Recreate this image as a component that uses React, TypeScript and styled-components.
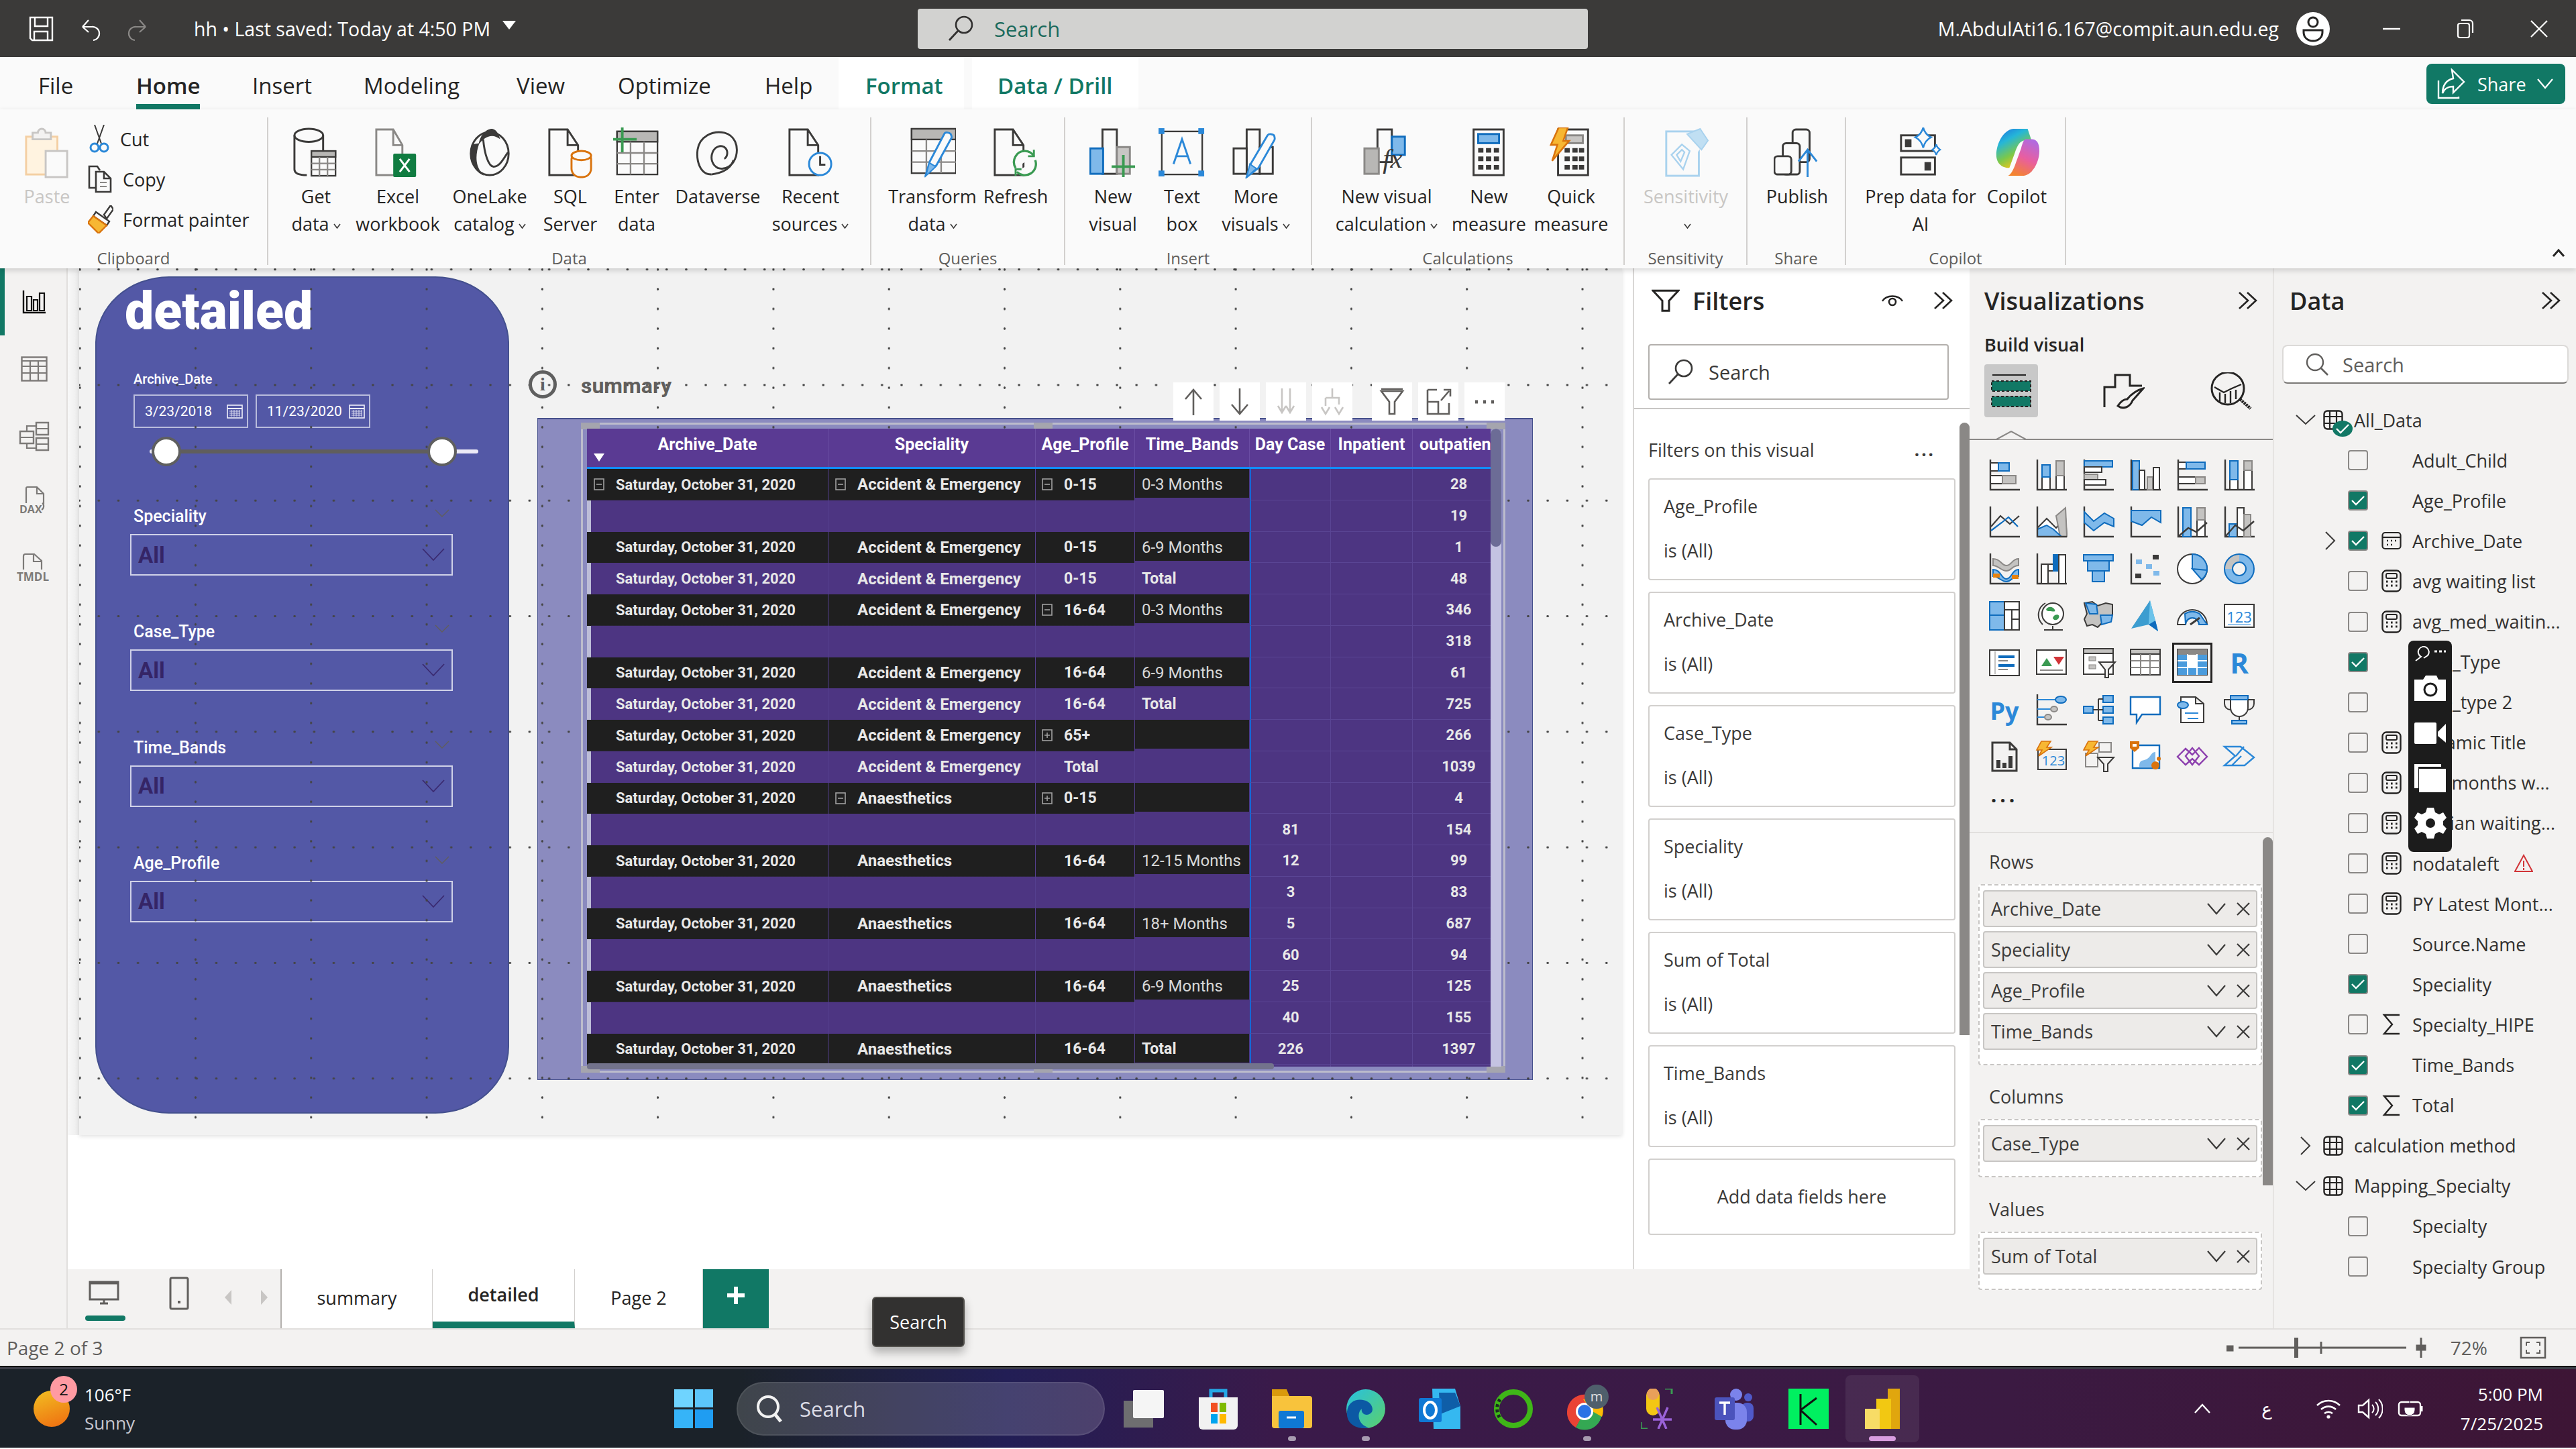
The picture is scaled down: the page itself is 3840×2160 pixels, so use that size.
import { ReactNode } from 'react'
import styled, { createGlobalStyle } from 'styled-components'

const INK = '#3b3a39'
const BLUE = '#7fb9ea'
const BLUE_D = '#0f6cbd'
const GREY = '#c4c3c1'
const TEAL = '#117865'
const UI = '"Open Sans", "Noto Sans", "DejaVu Sans", sans-serif'
const DIN = 'Roboto, "Liberation Sans", sans-serif'

const GlobalStyle = createGlobalStyle`
	html, body {
		margin: 0;
		padding: 0;
		background: #fff;
		overflow: hidden;
	}
	* {
		box-sizing: border-box;
	}
`

const Shell = styled.div`
	width: 3840px;
	height: 2160px;
	display: flex;
	flex-direction: column;
	overflow: hidden;
	font-family: ${UI};
	color: #252423;
`

/* title bar */

const TitleBar = styled.div`
	height: 85px;
	flex: none;
	display: flex;
	align-items: center;
	background: #3b3a39;
	color: #fff;
`

const TitleLeft = styled.div`
	width: 1368px;
	padding-left: 43px;
	display: flex;
	align-items: center;
	gap: 40px;
`

const SavedText = styled.span`
	margin-left: 29px;
	font-size: 28.5px;
	white-space: nowrap;
`

const TitleCaret = styled.span`
	width: 0;
	height: 0;
	margin: -10px 0 0 -22px;
	border-left: 10px solid transparent;
	border-right: 10px solid transparent;
	border-top: 13px solid #fff;
`

const TopSearch = styled.div`
	width: 999px;
	height: 60px;
	display: flex;
	align-items: center;
	gap: 30px;
	padding-left: 44px;
	background: #d2d2d0;
	border-radius: 4px;
	font-size: 31px;
	color: #1b6a5c;
`

const TitleRight = styled.div`
	flex: 1;
	display: flex;
	align-items: center;
	justify-content: flex-end;
`

const Email = styled.span`
	font-size: 28.5px;
	margin-right: 26px;
`

const Avatar = styled.div`
	width: 50px;
	height: 50px;
	margin-right: 37px;
	border-radius: 50%;
	background: #fff;
	display: flex;
	align-items: center;
	justify-content: center;
`

const WinBtn = styled.div`
	width: 110px;
	display: flex;
	justify-content: center;
`

/* ribbon tabs */

const TabRow = styled.div`
	height: 78px;
	flex: none;
	display: flex;
	padding: 0 16px 0 57px;
	background: #fafafa;
`

const RibbonTab = styled.div<{ $w: number; $pad?: number; $contextual?: boolean }>`
	width: ${p => p.$w}px;
	padding-left: ${p => p.$pad ?? 0}px;
	margin-right: ${p => (p.$contextual ? 12 : 0)}px;
	background: ${p => (p.$contextual ? '#fff' : 'transparent')};
	color: ${p => (p.$contextual ? TEAL : '#252423')};
	font-size: 33px;
	font-weight: ${p => (p.$contextual ? 600 : 400)};
	display: flex;
`

const TabLabel = styled.span<{ $active?: boolean }>`
	display: flex;
	align-items: center;
	padding-top: 14px;
	border-bottom: 8px solid ${p => (p.$active ? TEAL : 'transparent')};
	font-weight: ${p => (p.$active ? 600 : 'inherit')};
`

const ShareButton = styled.div`
	margin: 10px 0 0 auto;
	width: 207px;
	height: 60px;
	display: flex;
	align-items: center;
	gap: 16px;
	padding-left: 16px;
	background: ${TEAL};
	border-radius: 8px;
	color: #fff;
	font-size: 27px;
`

/* ribbon */

const Ribbon = styled.div`
	height: 237px;
	flex: none;
	position: relative;
	z-index: 5;
	display: flex;
	background: #fafafa;
	box-shadow: 0 3px 8px rgba(0, 0, 0, 0.16);
`

const RibbonGroup = styled.div<{ $w: number; $pad: number }>`
	width: ${p => p.$w}px;
	height: 220px;
	margin-top: 12px;
	padding-left: ${p => p.$pad}px;
	border-right: 2px solid #d2d0ce;
	display: flex;
	flex-direction: column;
`

const GroupButtons = styled.div`
	flex: 1;
	display: flex;
`

const GroupLabel = styled.div<{ $pad: number }>`
	height: 20px;
	line-height: 20px;
	font-size: 24px;
	color: #605e5c;
	text-align: center;
	white-space: nowrap;
	width: calc(100% + ${p => p.$pad}px);
	margin-left: -${p => p.$pad}px;
`

const BigButton = styled.div<{ $w: number; $muted?: boolean }>`
	width: ${p => p.$w}px;
	padding-top: 15px;
	display: flex;
	flex-direction: column;
	align-items: center;
	color: ${p => (p.$muted ? '#c8c6c4' : '#252423')};
`

const BigLabel = styled.div`
	margin-top: 6px;
	font-size: 27px;
	line-height: 41px;
	text-align: center;
	white-space: nowrap;
`

const MiniCaret = styled.svg`
	width: 11px;
	height: 8px;
	margin-left: 6px;
	vertical-align: 3px;
`

const SmallCol = styled.div`
	display: flex;
	flex-direction: column;
	margin-left: 6px;
	padding-top: 2px;
`

const SmallItem = styled.div`
	height: 60px;
	display: flex;
	align-items: center;
	gap: 14px;
	font-size: 27px;
	white-space: nowrap;
`

const Collapse = styled.svg`
	position: absolute;
	right: 16px;
	bottom: 16px;
	width: 20px;
	height: 14px;
`

const Caret = () => (
	<MiniCaret viewBox='0 0 11 8'>
		<path d='M1 1l4.5 6L10 1' fill='none' stroke={INK} strokeWidth='1.6' />
	</MiniCaret>
)

const Ico = styled.svg`
	width: 70px;
	height: 76px;
	flex: none;
`

const sk = { fill: 'none', stroke: INK, strokeWidth: 3 }

const DocOutline = ({ c = INK }: { c?: string }) => (
	<path d='M4 3h28l16 24v46H4z M32 3v24h16' fill='none' stroke={c} strokeWidth='3' />
)

const MiniTable = ({ x, y, w, h, c = 2 }: { x: number; y: number; w: number; h: number; c?: number }) => (
	<g stroke={INK} strokeWidth='2.4' fill='none'>
		<rect x={x} y={y} width={w} height={h} fill='#fafafa' />
		<rect x={x} y={y} width={w} height={h * 0.24} fill='#b8b7b5' />
		{Array.from({ length: c }).map((_, i) => (
			<path key={i} d={`M${x + ((i + 1) * w) / (c + 1)} ${y + h * 0.24}V${y + h}`} stroke='#8a8886' />
		))}
		<path d={`M${x} ${y + h * 0.5}H${x + w}M${x} ${y + h * 0.75}H${x + w}`} stroke='#8a8886' />
	</g>
)

const RibbonIcons: Record<string, ReactNode> = {
	paste: (
		<>
			<rect x='4' y='14' width='48' height='58' fill='#fff3e0' stroke='#f4cfa3' strokeWidth='3' />
			<path d='M14 14V8h8a6 6 0 0 1 12 0h8v10H14z' fill='#f3f2f1' stroke='#c8c6c4' strokeWidth='3' />
			<rect x='34' y='36' width='33' height='40' fill='#fafafa' stroke='#c8c6c4' strokeWidth='3' />
		</>
	),
	getData: (
		<>
			<ellipse cx='25' cy='12' rx='22' ry='10' {...sk} />
			<path d='M3 12v52c0 7 8 9 19 9M47 12v26' {...sk} />
			<MiniTable x={29} y={36} w={37} h={38} />
		</>
	),
	excel: (
		<>
			<path d='M3 3h26l14 24v46H3z M29 3v24h14' fill='none' stroke='#8a8886' strokeWidth='3' />
			<rect x='29' y='40' width='35' height='36' rx='2' fill='#107c41' />
			<path d='M39 48l15 20M54 48L39 68' stroke='#fff' strokeWidth='3' />
		</>
	),
	onelake: (
		<>
			<ellipse cx='36' cy='40' rx='29' ry='33' {...sk} />
			<path d='M9 26C3 46 10 68 28 74 14 62 13 44 20 24z' fill={INK} />
			<path d='M19 26C22 9 32 2 40 2c6 1 10 8 12 16C40 8 28 14 19 26z' fill={INK} />
			<path d='M26 18c2 22 8 42 16 42 10 0 16-14 22-22' {...sk} />
		</>
	),
	sql: (
		<>
			<DocOutline />
			<rect x='38' y='36' width='30' height='40' rx='13' fill='#fafafa' stroke='#d9730d' strokeWidth='3' />
			<ellipse cx='53' cy='43' rx='15' ry='7' fill='#fafafa' stroke='#d9730d' strokeWidth='3' />
		</>
	),
	enter: (
		<>
			<MiniTable x={6} y={6} w={62} h={66} c={2} />
			<path d='M14 0v38M0 18h36' stroke='#3a9a52' strokeWidth='4' fill='none' />
		</>
	),
	dataverse: (
		<>
			<path d='M26 72C8 72 3 50 5 34 8 14 28 4 46 8c16 4 22 20 18 36-4 14-16 22-28 18-8-4-12-14-8-24 3-8 12-12 18-8 6 4 6 14 0 18' {...sk} />
			<path d='M26 72c14-2 30-8 34-22' {...sk} />
		</>
	),
	recent: (
		<>
			<DocOutline />
			<circle cx='51' cy='56' r='17' fill='#fafafa' stroke='#2b88d8' strokeWidth='3' />
			<path d='M51 44v13h8' stroke={INK} strokeWidth='3' fill='none' />
		</>
	),
	transform: (
		<>
			<MiniTable x={4} y={2} w={68} h={68} c={2} />
			<path d='M26 72l6-20 22-42c2-4 8-2 10 0 2 4 2 6 0 8L42 58z' fill='#fafafa' stroke='#2b88d8' strokeWidth='3' />
			<path d='M26 74l5-20 10 6z' fill={BLUE} stroke='#2b88d8' strokeWidth='2' />
		</>
	),
	refresh: (
		<>
			<DocOutline />
			<path d='M36 62a17 17 0 0 1 14-26 16 16 0 0 1 14 8M66 50a17 17 0 0 1-28 18' fill='#fafafa' stroke='#3a9a52' strokeWidth='3.4' />
			<path d='M64 34v10h-9M36 74V64h9' fill='none' stroke='#3a9a52' strokeWidth='3' />
		</>
	),
	newVisual: (
		<>
			<rect x='20' y='3' width='22' height='68' fill='#fafafa' stroke={INK} strokeWidth='3' />
			<rect x='42' y='30' width='20' height='41' fill='#c8c6c4' stroke='#8a8886' strokeWidth='3' />
			<rect x='1' y='32' width='20' height='39' fill={BLUE} stroke={BLUE_D} strokeWidth='3' />
			<path d='M52 42v34M34 60h36' stroke='#3a9a52' strokeWidth='4' fill='none' />
		</>
	),
	textBox: (
		<>
			<rect x='5' y='6' width='62' height='66' fill='none' stroke={INK} strokeWidth='2.4' />
			{[[0, 1], [61, 1], [0, 66], [61, 66]].map(([x, y]) => (
				<rect key={`${x}${y}`} x={x} y={y} width='9' height='9' fill='#2b88d8' />
			))}
			<path d='M23 56L36 18l13 38M27 44h18' fill='none' stroke='#2b88d8' strokeWidth='3' />
		</>
	),
	moreVisuals: (
		<>
			<rect x='22' y='3' width='20' height='68' fill='#fafafa' stroke={INK} strokeWidth='3' />
			<rect x='42' y='30' width='20' height='41' fill='#fafafa' stroke={INK} strokeWidth='3' />
			<rect x='2' y='32' width='20' height='39' fill='#fafafa' stroke={INK} strokeWidth='3' />
			<path d='M22 76l6-20 26-44c2-3 8-2 10 0 1 3 2 6 0 8L40 62z' fill='#fafafa' stroke='#2b88d8' strokeWidth='3' />
			<path d='M22 76l5-20 10 7z' fill={BLUE} stroke='#2b88d8' strokeWidth='2' />
		</>
	),
	fx: (
		<>
			<rect x='22' y='3' width='22' height='50' fill='#fafafa' stroke={INK} strokeWidth='3' />
			<rect x='44' y='14' width='20' height='28' fill={BLUE} stroke={BLUE_D} strokeWidth='3' />
			<rect x='2' y='32' width='22' height='39' fill='#b8b7b5' stroke='#8a8886' strokeWidth='3' />
			<text x='30' y='62' fontFamily='"Liberation Serif", serif' fontStyle='italic' fontSize='42' fill={INK}>fx</text>
		</>
	),
	measure: (
		<>
			<rect x='12' y='3' width='46' height='70' fill='#fafafa' stroke={INK} strokeWidth='3' />
			<rect x='19' y='10' width='32' height='14' fill={BLUE} stroke={BLUE_D} strokeWidth='3' />
			{[32, 45, 58].map(y => (
				<path key={y} d={`M19 ${y + 3}h8M31 ${y + 3}h8M43 ${y + 3}h8`} stroke={INK} strokeWidth='7' />
			))}
		</>
	),
	quick: (
		<>
			<rect x='16' y='3' width='46' height='70' fill='#fafafa' stroke={INK} strokeWidth='3' />
			<rect x='28' y='12' width='26' height='12' fill='#c8c6c4' stroke='#8a8886' strokeWidth='3' />
			{[32, 45, 58].map(y => (
				<path key={y} d={`M26 ${y + 3}h8M38 ${y + 3}h8M48 ${y + 3}h8`} stroke={INK} strokeWidth='7' />
			))}
			<path d='M18 0h14l-7 20h9L8 50l8-24H6z' transform='translate(-1 0) scale(1 1.02)' fill='#f7b733' stroke='#d9730d' strokeWidth='2.6' />
		</>
	),
	sensitivity: (
		<>
			<rect x='6' y='6' width='50' height='68' fill='none' stroke='#a9d2ee' strokeWidth='3' />
			<path d='M30 14l30-12 10 14-32 44-20-18z' fill='#fafafa' stroke='none' />
			<path d='M38 10l20-8 12 18-10 14z' fill='#c0dff3' stroke='#a9d2ee' strokeWidth='2' />
			<path d='M14 42L30 26l12 10-10 28z M22 42l8-8 4 4-6 14z' fill='none' stroke='#a9d2ee' strokeWidth='2.4' />
		</>
	),
	publish: (
		<>
			<rect x='29' y='3' width='26' height='50' rx='5' {...sk} />
			<rect x='14' y='24' width='26' height='48' rx='5' fill='#fafafa' stroke={INK} strokeWidth='3' />
			<rect x='1' y='44' width='26' height='28' rx='5' fill='#fafafa' stroke={INK} strokeWidth='3' />
			<path d='M52 76V36M38 52l14-18 14 18' fill='none' stroke='#2b88d8' strokeWidth='3' />
		</>
	),
	prep: (
		<>
			<rect x='6' y='12' width='52' height='24' {...sk} />
			<rect x='6' y='46' width='52' height='26' {...sk} />
			<rect x='12' y='18' width='10' height='12' fill={INK} />
			<rect x='42' y='53' width='10' height='13' fill={INK} />
			<path d='M40 0c2 8 6 12 12 15-6 3-10 8-12 16-2-8-6-13-12-16 6-3 10-7 12-15z' fill='#fafafa' stroke='#2b88d8' strokeWidth='2.6' />
			<path d='M60 26c1 4 3 6 6 8-3 2-5 4-6 8-1-4-3-6-6-8 3-2 5-4 6-8z' fill='#fafafa' stroke='#2b88d8' strokeWidth='2.4' />
		</>
	),
	copilot: (
		<>
			<defs>
				<linearGradient id='cpA' x1='0' y1='0' x2='0.5' y2='1'>
					<stop offset='0' stopColor='#1c6de0' />
					<stop offset='0.35' stopColor='#25b6d8' />
					<stop offset='0.7' stopColor='#7cc84a' />
					<stop offset='1' stopColor='#f4c516' />
				</linearGradient>
				<linearGradient id='cpB' x1='0.7' y1='0' x2='0.3' y2='1'>
					<stop offset='0' stopColor='#b06ae0' />
					<stop offset='0.5' stopColor='#e85ea0' />
					<stop offset='1' stopColor='#f4842e' />
				</linearGradient>
			</defs>
			<path d='M30 2h22l6 18H48C40 20 36 28 32 40L24 62c-10 0-20-6-20-20C4 26 14 4 30 2z' fill='url(#cpA)' />
			<path d='M48 18h10c8 0 12 6 12 18 0 16-10 38-26 38H22c4-2 8-8 12-20l8-22c2-8 4-12 6-14z' fill='url(#cpB)' />
		</>
	),
}

type BigItem = { w: number; icon: string; label: ReactNode; muted?: boolean }

const ribbonGroups: { w: number; pad: number; title: string; items: BigItem[] }[] = [
	{ w: 899, pad: 10, title: 'Data', items: [
		{ w: 122, icon: 'getData', label: <>Get<br />data<Caret /></> },
		{ w: 122, icon: 'excel', label: <>Excel<br />workbook</> },
		{ w: 152, icon: 'onelake', label: <>OneLake<br />catalog<Caret /></> },
		{ w: 88, icon: 'sql', label: <>SQL<br />Server</> },
		{ w: 110, icon: 'enter', label: <>Enter<br />data</> },
		{ w: 132, icon: 'dataverse', label: 'Dataverse' },
		{ w: 144, icon: 'recent', label: <>Recent<br />sources<Caret /></> },
	] },
	{ w: 289, pad: 29, title: 'Queries', items: [
		{ w: 124, icon: 'transform', label: <>Transform<br />data<Caret /></> },
		{ w: 124, icon: 'refresh', label: 'Refresh' },
	] },
	{ w: 368, pad: 21, title: 'Insert', items: [
		{ w: 100, icon: 'newVisual', label: <>New<br />visual</> },
		{ w: 106, icon: 'textBox', label: <>Text<br />box</> },
		{ w: 114, icon: 'moreVisuals', label: <>More<br />visuals<Caret /></> },
	] },
	{ w: 466, pad: 35, title: 'Calculations', items: [
		{ w: 152, icon: 'fx', label: <>New visual<br />calculation<Caret /></> },
		{ w: 153, icon: 'measure', label: <>New<br />measure</> },
		{ w: 92, icon: 'quick', label: <>Quick<br />measure</> },
	] },
	{ w: 183, pad: 11, title: 'Sensitivity', items: [
		{ w: 160, icon: 'sensitivity', muted: true, label: <>Sensitivity<br /><Caret /></> },
	] },
	{ w: 147, pad: 14, title: 'Share', items: [
		{ w: 120, icon: 'publish', label: 'Publish' },
	] },
	{ w: 328, pad: 39, title: 'Copilot', items: [
		{ w: 144, icon: 'prep', label: <>Prep data for<br />AI</> },
		{ w: 144, icon: 'copilot', label: 'Copilot' },
	] },
]

const BigBtn = ({ item }: { item: BigItem }) => (
	<BigButton $w={item.w} $muted={item.muted}>
		<Ico viewBox='0 0 72 78'>{RibbonIcons[item.icon]}</Ico>
		<BigLabel>{item.label}</BigLabel>
	</BigButton>
)

/* main area */

const Main = styled.div`
	height: 1580px;
	flex: none;
	display: flex;
	background: #f3f2f1;
`

const Rail = styled.div`
	width: 101px;
	flex: none;
	display: flex;
	flex-direction: column;
	border-right: 2px solid #e1dfdd;
`

const RailItem = styled.div<{ $active?: boolean }>`
	height: 100px;
	display: flex;
	align-items: center;
	justify-content: center;
	border-left: 7px solid ${p => (p.$active ? TEAL : 'transparent')};
	padding-right: 4px;
`

const CenterCol = styled.div`
	width: 2835px;
	flex: none;
	display: flex;
	flex-direction: column;
`

const CenterTop = styled.div`
	height: 1492px;
	display: flex;
`

const Canvas = styled.div`
	width: 2335px;
	flex: none;
	background: #fff;
	padding: 0 16px 0 17px;
	border-right: 2px solid #d9d7d5;
	position: relative;
	&::before {
		content: '';
		position: absolute;
		left: 0;
		top: 0;
		width: 17px;
		height: 1292px;
		background: linear-gradient(90deg, #f8f8f8, #ececec);
	}
`

const ReportPage = styled.div`
	position: relative;
	height: 1292px;
	background: #f2f2f2;
	padding: 12px 0 0 24px;
	display: flex;
	gap: 42px;
	box-shadow: 0 2px 6px rgba(0, 0, 0, 0.12);
`

const DotGrid = styled.div`
	position: absolute;
	inset: 0;
	z-index: 1;
	pointer-events: none;
	background-image: radial-gradient(circle, #444 1.4px, transparent 2px),
		radial-gradient(circle, #444 1.4px, transparent 2px);
	background-size: 172.3px 29.4px, 29.2px 172.3px;
	background-position: -85px -13px, -14.5px -84.5px;
`

const SlicerPanel = styled.div`
	width: 617px;
	height: 1248px;
	flex: none;
	background: #5358a6;
	border: 2px solid #44508e;
	border-radius: 110px / 100px;
	font-family: ${DIN};
	color: #fff;
`

const PanelTitle = styled.div`
	height: 100px;
	line-height: 100px;
	padding-left: 42px;
	font-size: 77px;
	font-weight: 900;
`

const DateLabel = styled.div`
	margin: 36px 0 0 55px;
	height: 30px;
	line-height: 30px;
	font-size: 20px;
	font-weight: 500;
`

const DateRow = styled.div`
	margin: 8px 0 0 55px;
	display: flex;
	gap: 11px;
`

const DateBox = styled.div`
	width: 171px;
	height: 50px;
	padding: 0 6px 0 15px;
	display: flex;
	align-items: center;
	justify-content: space-between;
	border: 2px solid #b9bcdc;
	font-size: 21px;
`

const RangeSlider = styled.div`
	position: relative;
	height: 46px;
	width: 490px;
	margin: 12px 0 0 79px;
	&::before {
		content: '';
		position: absolute;
		left: 0;
		right: 0;
		top: 20px;
		height: 6px;
		border-radius: 3px;
		background: #eceaf6;
	}
	&::after {
		content: '';
		position: absolute;
		left: 25px;
		width: 411px;
		top: 20px;
		height: 6px;
		background: #605e5c;
	}
`

const RangeHandle = styled.div<{ $at: number }>`
	position: absolute;
	z-index: 1;
	top: 1px;
	left: ${p => p.$at}px;
	width: 44px;
	height: 44px;
	border-radius: 50%;
	background: #fff;
	border: 4px solid #5f5f5f;
`

const SlicerStack = styled.div`
	margin: 57px 0 0 50px;
`

const Slicer = styled.div`
	position: relative;
	height: 172.3px;
`

const SlicerLabel = styled.div`
	height: 34px;
	line-height: 34px;
	padding-left: 5px;
	font-size: 25px;
	font-weight: 500;
`

const SlicerHide = styled.svg<{ $x: number; $y: number }>`
	position: absolute;
	left: ${p => p.$x}px;
	top: ${p => p.$y}px;
	width: 22px;
	height: 13px;
`

const SlicerBox = styled.div`
	margin-top: 9px;
	width: 481px;
	height: 62px;
	padding: 0 10px;
	display: flex;
	align-items: center;
	justify-content: space-between;
	border: 2px solid #d0d2e8;
	font-size: 33px;
	font-weight: 700;
	color: #352566;
`

const RightCol = styled.div`
	width: 1484px;
	flex: none;
`

const VisualTitleRow = styled.div`
	height: 211px;
	padding-top: 140px;
	display: flex;
	align-items: flex-start;
	gap: 36px;
	margin-left: -13px;
	position: relative;
	z-index: 2;
`

const InfoBadge = styled.div`
	width: 42px;
	height: 42px;
	border: 5px solid #5f5f5f;
	border-radius: 50%;
	display: flex;
	align-items: center;
	justify-content: center;
	color: #5f5f5f;
	font-family: 'Liberation Serif', serif;
	font-size: 28px;
	font-weight: 700;
`

const VisualName = styled.div`
	font-family: ${DIN};
	font-size: 32px;
	font-weight: 700;
	color: #605e5c;
	line-height: 42px;
	margin-top: 2px;
`

const VisualFrame = styled.div`
	position: relative;
	height: 987px;
	padding: 14px 48px 0 73px;
	background: #8b8bbf;
	border: 2px solid #46508c;
	border-width: 2px 1px 1px 1px;
	display: flex;
`

const FocusBar = styled.div`
	position: absolute;
	z-index: 3;
	top: -55px;
	right: 41px;
	display: flex;
	gap: 9px;
`

const FocusBtn = styled.div<{ $gap?: boolean }>`
	width: 60px;
	height: 57px;
	margin-left: ${p => (p.$gap ? 20 : 0)}px;
	background: #fff;
	display: flex;
	align-items: center;
	justify-content: center;
`

const SelectBox = styled.div`
	position: absolute;
	z-index: 2;
	left: 64px;
	right: 40px;
	top: 5px;
	bottom: 10px;
	border: 3px solid #bcbccc;
	pointer-events: none;
`

const SelHandle = styled.div<{ $v: string; $h: string }>`
	position: absolute;
	${p => p.$v};
	${p => p.$h};
	width: 28px;
	height: 10px;
	background: #a5a5ae;
`

const TableWrap = styled.div`
	position: relative;
	z-index: 2;
	height: 951px;
	display: flex;
`

const TableView = styled.div`
	width: 1347px;
	height: 100%;
	overflow: hidden;
	background: #4d3582;
	font-family: ${DIN};
	color: #e8e8e8;
	font-size: 22px;
`

const gridCols = '360px 309px 148px 171px 121px 122px 138px'

const HeadRow = styled.div`
	position: relative;
	display: grid;
	grid-template-columns: ${gridCols};
	width: 1369px;
	height: 60px;
	background: #5a3a93;
	border-bottom: 3px solid #118dff;
`

const HeadCell = styled.div<{ $pad?: number }>`
	padding: 10px 0 0 ${p => p.$pad ?? 0}px;
	text-align: ${p => (p.$pad ? 'left' : 'center')};
	font-size: 25px;
	font-weight: 700;
	color: #fff;
	line-height: 28px;
	white-space: nowrap;
	overflow: hidden;
	border-right: 1px solid #6a4da3;
`

const SortMark = styled.span`
	position: absolute;
	left: 10px;
	top: 37px;
	width: 0;
	height: 0;
	border-left: 8px solid transparent;
	border-right: 8px solid transparent;
	border-top: 12px solid #fff;
`

const BodyRow = styled.div`
	display: grid;
	grid-template-columns: ${gridCols};
	width: 1369px;
	height: 46.75px;
`

const TextCell = styled.div<{ $dark?: boolean; $short?: boolean; $pad?: number; $light?: boolean; $size?: number }>`
	display: flex;
	align-items: center;
	padding-left: ${p => p.$pad ?? 10}px;
	font-size: ${p => p.$size ?? 22}px;
	font-weight: ${p => (p.$light ? 400 : 700)};
	color: ${p => (p.$light ? '#d8d8d8' : '#e8e8e8')};
	white-space: nowrap;
	background: ${p =>
		p.$dark
			? `linear-gradient(#1f1f1f, #1f1f1f) top / 100% ${p.$short ? 43 : 46.75}px no-repeat`
			: 'transparent'};
	border-right: 1px solid rgba(90, 70, 150, ${p => (p.$short ? 0 : 0.6)});
	&:first-child {
		border-left: ${p => (p.$dark ? '6px solid #1f1f1f' : '6px solid #bdbdd8')};
		padding-left: 37px;
	}
`

const TableExpand = styled.svg`
	width: 16px;
	height: 18px;
	margin: 0 17px 0 -33px;
	flex: none;
`

const NumCell = styled.div<{ $first?: boolean }>`
	display: flex;
	align-items: center;
	justify-content: center;
	font-weight: 700;
	border-right: 1px solid #5a4594;
	border-bottom: 1px solid #5a4594;
	border-left: ${p => (p.$first ? '2px solid #1668d6' : '0')};
`

const VScroll = styled.div`
	width: 16px;
	height: 100%;
	background: #c4c3e2;
	border-radius: 8px 8px 0 0;
	overflow: hidden;
`

const VThumb = styled.div`
	width: 16px;
	height: 176px;
	background: #6c6c96;
	border-radius: 8px;
`

const HScroll = styled.div`
	position: absolute;
	left: 0;
	bottom: -4px;
	width: 1024px;
	height: 9px;
	background: #73738c;
	border-radius: 4px;
`

/* filters */

const FiltersPanel = styled.div`
	width: 500px;
	flex: none;
	background: #fff;
	display: flex;
	flex-direction: column;
	position: relative;
`

const PaneHead = styled.div<{ $pad: number; $right: number }>`
	height: 96px;
	display: flex;
	align-items: center;
	padding: 0 ${p => p.$right}px 0 ${p => p.$pad}px;
	font-size: 36px;
	font-weight: 600;
	color: #252423;
`

const FilterIconGap = styled.span`
	margin-left: 19px;
`

const PushRight = styled.div<{ $gap?: number }>`
	margin-left: auto;
	display: flex;
	align-items: center;
	gap: ${p => p.$gap ?? 0}px;
`

const FilterSearchWrap = styled.div`
	padding: 17px 31px 12px 21px;
	border-bottom: 2px solid #c8c6c4;
`

const FilterSearch = styled.div`
	height: 83px;
	display: flex;
	align-items: center;
	gap: 22px;
	padding-left: 26px;
	border: 2px solid #b3b0ad;
	border-radius: 4px;
	font-size: 29px;
	color: #3b3a39;
`

const FilterBody = styled.div`
	flex: 1;
	padding: 0 21px;
	position: relative;
`

const FilterTitle = styled.div`
	height: 103px;
	padding: 17px 30px 0 0;
	display: flex;
	align-items: center;
	justify-content: space-between;
	font-size: 27px;
	color: #3b3a39;
`

const Dots3 = styled.span`
	letter-spacing: 3px;
	font-size: 26px;
	font-weight: 700;
`

const FilterCard = styled.div<{ $add?: boolean }>`
	width: 458px;
	height: ${p => (p.$add ? 114 : 152)}px;
	margin-bottom: 17px;
	padding: ${p => (p.$add ? '0' : '7px 0 0 21px')};
	border: 2px solid #d2d0ce;
	border-radius: 4px;
	font-size: 27px;
	line-height: 66px;
	color: #3b3a39;
	display: ${p => (p.$add ? 'flex' : 'block')};
	align-items: center;
	justify-content: center;
`

const PaneScroll = styled.div<{ $top: number; $h: number }>`
	position: absolute;
	right: 0;
	top: ${p => p.$top}px;
	width: 15px;
	height: ${p => p.$h}px;
	border-radius: 8px 8px 0 0;
	background: #8a8886;
`

/* page tabs */

const PageBar = styled.div`
	height: 88px;
	display: flex;
	background: #f3f2f1;
`

const ViewTabs = styled.div`
	width: 319px;
	flex: none;
	display: flex;
	align-items: flex-start;
	position: relative;
	border-right: 2px solid #b3b0ad;
`

const ViewMark = styled.div`
	position: absolute;
	left: 26px;
	top: 69px;
	width: 60px;
	height: 8px;
	border-radius: 4px;
	background: ${TEAL};
`

const ViewIcon = styled.svg<{ $x: number; $y: number; $w: number; $h: number }>`
	position: absolute;
	left: ${p => p.$x}px;
	top: ${p => p.$y}px;
	width: ${p => p.$w}px;
	height: ${p => p.$h}px;
`

const PageTab = styled.div<{ $w: number; $active?: boolean }>`
	width: ${p => p.$w}px;
	flex: none;
	height: 88px;
	display: flex;
	align-items: center;
	justify-content: center;
	padding-bottom: 4px;
	background: #fff;
	font-size: 27px;
	font-weight: ${p => (p.$active ? 600 : 400)};
	border-right: 1px solid #d2d0ce;
	border-bottom: ${p => (p.$active ? `10px solid ${TEAL}` : '0')};
`

const AddPage = styled.div`
	width: 98px;
	height: 88px;
	flex: none;
	background: ${TEAL};
	display: flex;
	align-items: center;
	justify-content: center;
	padding-bottom: 10px;
`

const Tip = styled.div`
	position: absolute;
	z-index: 6;
	left: 1300px;
	top: 1933px;
	width: 138px;
	height: 75px;
	display: flex;
	align-items: center;
	justify-content: center;
	border-radius: 6px;
	background: #323130;
	border: 2px solid #55534f;
	box-shadow: 0 8px 14px rgba(0, 0, 0, 0.28);
	color: #fff;
	font-size: 27px;
`

/* visualizations */

const VizPanel = styled.div`
	width: 454px;
	flex: none;
	background: #f3f2f1;
	position: relative;
	border-right: 2px solid #e6e4e2;
`

const VizUpper = styled.div`
	height: 842px;
	border-bottom: 2px solid #e1dfdd;
`

const BuildTitle = styled.div`
	padding-left: 22px;
	height: 36px;
	line-height: 36px;
	font-size: 27px;
	font-weight: 600;
`

const PaneTabs = styled.div`
	position: relative;
	height: 113px;
	margin-top: 11px;
	padding-left: 22px;
	border-bottom: 2px solid #8a8886;
`

const PaneSel = styled.div`
	position: absolute;
	left: 22px;
	top: 0;
	width: 80px;
	height: 79px;
	background: #c8c8c8;
	border-radius: 4px;
	display: flex;
	align-items: center;
	justify-content: center;
`

const PaneTool = styled.svg<{ $x: number }>`
	position: absolute;
	left: ${p => p.$x}px;
	top: 12px;
	width: 62px;
	height: 56px;
`

const PaneNotch = styled.svg`
	position: absolute;
	left: 40px;
	bottom: -2px;
	width: 44px;
	height: 14px;
`

const VizGrid = styled.div`
	margin-top: 29px;
	padding-left: 29px;
	display: grid;
	grid-template-columns: repeat(6, 46px);
	grid-auto-rows: 46px;
	gap: 24px;
`

const VizSvg = styled.svg<{ $sel?: boolean }>`
	width: 46px;
	height: 46px;
	overflow: visible;
	outline: ${p => (p.$sel ? `3px solid #252423` : 'none')};
	outline-offset: 4px;
`

const MoreDots = styled.div`
	font-size: 30px;
	font-weight: 700;
	letter-spacing: 5px;
	line-height: 20px;
	text-align: center;
`

const WellLabel = styled.div<{ $top: number }>`
	margin: ${p => p.$top}px 0 0 29px;
	height: 40px;
	line-height: 40px;
	font-size: 27px;
	color: #3b3a39;
`

const WellBox = styled.div`
	width: 423px;
	margin: 13px 0 0 13px;
	padding: 7px 5px 21px;
	background: #fff;
	border: 2px dashed #c8c6c4;
	border-radius: 4px;
	display: flex;
	flex-direction: column;
	gap: 6px;
`

const Pill = styled.div`
	height: 55px;
	display: flex;
	align-items: center;
	padding: 0 8px 0 10px;
	background: #edebe9;
	border: 2px solid #c8c6c4;
	border-radius: 4px;
	font-size: 27px;
	color: #3b3a39;
`

const PillTools = styled.div`
	margin-left: auto;
	display: flex;
	gap: 14px;
	align-items: center;
`

/* data */

const DataPanel = styled.div`
	flex: 1;
	background: #f3f2f1;
`

const DataSearch = styled.div`
	width: 427px;
	height: 58px;
	margin: 18px 0 24px 12px;
	padding-left: 32px;
	display: flex;
	align-items: center;
	gap: 20px;
	background: #fff;
	border: 2px solid #dcdad8;
	border-bottom-color: #7a7876;
	border-radius: 8px;
	font-size: 29px;
	color: #605e5c;
`

const TreeRow = styled.div<{ $table?: boolean }>`
	height: 60.1px;
	display: flex;
	align-items: center;
	padding-left: ${p => (p.$table ? 32 : 69)}px;
	font-size: 27px;
	white-space: nowrap;
	color: #323130;
`

const TreeChev = styled.div`
	width: 41px;
	flex: none;
	display: flex;
	align-items: center;
	justify-content: center;
	padding-right: 11px;
`

const Check = styled.div<{ $on?: boolean }>`
	width: 30px;
	height: 30px;
	flex: none;
	margin-right: 20px;
	display: flex;
	align-items: center;
	justify-content: center;
	background: ${p => (p.$on ? TEAL : 'transparent')};
	border: 2px solid #8a8886;
	border-radius: 4px;
`

const TypeSlot = styled.div`
	position: relative;
	width: 30px;
	height: 34px;
	flex: none;
	margin-right: 16px;
	display: flex;
	align-items: center;
	justify-content: center;
`

const TableBadge = styled.div`
	position: absolute;
	left: 14px;
	top: 18px;
	width: 30px;
	height: 24px;
	border-radius: 50%;
	background: ${TEAL};
	display: flex;
	align-items: center;
	justify-content: center;
`

const WarnIcon = styled.svg`
	width: 28px;
	height: 28px;
	margin-left: 22px;
`

const Recorder = styled.div`
	position: absolute;
	z-index: 7;
	left: 3590px;
	top: 955px;
	width: 65px;
	height: 315px;
	padding: 8px 9px;
	background: #1c1c1c;
	border-radius: 8px;
	display: flex;
	flex-direction: column;
	align-items: center;
`

const RecorderTop = styled.div`
	height: 29px;
`

const RecorderSlot = styled.div`
	height: 67px;
	display: flex;
	align-items: center;
`

/* status and task bar */

const StatusBar = styled.div`
	height: 58px;
	flex: none;
	display: flex;
	align-items: center;
	padding: 0 44px 0 10px;
	background: #f3f2f1;
	border-top: 2px solid #e1dfdd;
	border-bottom: 2px solid #111;
	font-size: 28px;
	color: #605e5c;
`

const ZoomWrap = styled.div`
	margin-left: auto;
	display: flex;
	align-items: center;
`

const ZoomValue = styled.span`
	margin: 0 48px 0 34px;
`

const Taskbar = styled.div`
	height: 120px;
	flex: none;
	display: flex;
	align-items: center;
	position: relative;
	border-top: 3px solid #3d3e48;
	background: linear-gradient(90deg, #1b2229 0, #1b2229 1100px, #221e55 1500px, #3a1a4a 1900px, #3b1a42 3000px, #3d1535 100%);
	color: #fff;
`

const Weather = styled.div`
	width: 1005px;
	flex: none;
	padding-left: 50px;
	display: flex;
	align-items: center;
	gap: 22px;
`

const WeatherIcon = styled.div`
	position: relative;
	width: 54px;
	height: 54px;
	border-radius: 50%;
	background: linear-gradient(160deg, #f2c022, #ee6b10);
`

const WeatherBadge = styled.div`
	position: absolute;
	left: 25px;
	top: -22px;
	width: 40px;
	height: 40px;
	border-radius: 50%;
	background: #ff9aa2;
	display: flex;
	align-items: center;
	justify-content: center;
	color: #111;
	font-size: 24px;
`

const WeatherText = styled.div`
	font-size: 26px;
	line-height: 42px;
	color: #fff;
`

const WeatherSub = styled.div`
	color: #c8c8d0;
`

const WinLogo = styled.div`
	width: 58px;
	height: 58px;
	flex: none;
	margin-right: 35px;
	display: grid;
	grid-template-columns: 1fr 1fr;
	grid-template-rows: 1fr 1fr;
	gap: 3px;
	& > span:nth-child(1) { background: #6fd4ff; }
	& > span:nth-child(2) { background: #5cc6fb; }
	& > span:nth-child(3) { background: #36b4f8; }
	& > span:nth-child(4) { background: #1f9df2; }
`

const TaskSearch = styled.div`
	width: 549px;
	height: 80px;
	flex: none;
	padding-left: 26px;
	display: flex;
	align-items: center;
	gap: 24px;
	border-radius: 40px;
	background: rgba(255, 255, 255, 0.16);
	border: 2px solid rgba(255, 255, 255, 0.08);
	font-size: 31px;
	color: #dcdce6;
`

const AppSlots = styled.div`
	margin-left: 4px;
	display: flex;
`

const AppSlot = styled.div<{ $active?: boolean; $dot?: boolean }>`
	position: relative;
	width: 110px;
	height: 100px;
	display: flex;
	align-items: center;
	justify-content: center;
	background: ${p => (p.$active ? 'rgba(255,255,255,0.07)' : 'transparent')};
	border-radius: 8px;
	&::after {
		content: '';
		display: ${p => (p.$dot || p.$active ? 'block' : 'none')};
		position: absolute;
		bottom: 2px;
		left: 50%;
		transform: translateX(-50%);
		width: ${p => (p.$active ? 40 : 12)}px;
		height: 7px;
		border-radius: 4px;
		background: ${p => (p.$active ? '#d99de0' : '#a79bb0')};
	}
`

const Tray = styled.div`
	margin-left: auto;
	width: 587px;
	padding-right: 49px;
	display: flex;
	align-items: center;
	font-size: 26px;
`

const TraySlot = styled.div<{ $ml?: number }>`
	width: 60px;
	margin-left: ${p => p.$ml ?? 0}px;
	display: flex;
	align-items: center;
	justify-content: center;
`

const Clock = styled.div`
	margin-left: auto;
	text-align: right;
	line-height: 44px;
	font-size: 26px;
`

/* small drawings */

const Chevrons = () => (
	<svg width='30' height='28' viewBox='0 0 30 28'>
		<path d='M2 2l13 12L2 26M14 2l13 12-13 12' fill='none' stroke='#252423' strokeWidth='2.6' />
	</svg>
)

const Funnel = ({ size = 42, c = '#252423' }: { size?: number; c?: string }) => (
	<svg width={size} height={size * 0.82} viewBox='0 0 42 34'>
		<path d='M2 2h38L26 17v15H16V17z' fill='none' stroke={c} strokeWidth='3' />
	</svg>
)

const LensLeft = ({ c = '#3b3a39', s = 40 }: { c?: string; s?: number }) => (
	<svg width={s} height={s} viewBox='0 0 40 40'>
		<circle cx='25' cy='14' r='12' fill='none' stroke={c} strokeWidth='2.6' />
		<path d='M16 23L3 37' stroke={c} strokeWidth='2.8' />
	</svg>
)

const LensRight = () => (
	<svg width='36' height='36' viewBox='0 0 36 36'>
		<circle cx='15' cy='15' r='12' fill='none' stroke='#605e5c' strokeWidth='2.4' />
		<path d='M24 24l10 10' stroke='#605e5c' strokeWidth='2.6' />
	</svg>
)

const PillChev = () => (
	<svg width='30' height='20' viewBox='0 0 30 20'>
		<path d='M2 2l13 15L28 2' fill='none' stroke='#3b3a39' strokeWidth='2.2' />
	</svg>
)

const PillClose = () => (
	<svg width='22' height='22' viewBox='0 0 22 22'>
		<path d='M2 2l18 18M20 2L2 20' fill='none' stroke='#3b3a39' strokeWidth='2.2' />
	</svg>
)

const CheckMark = () => (
	<svg width='20' height='16' viewBox='0 0 20 16'>
		<path d='M1 8l6 6L19 2' fill='none' stroke='#fff' strokeWidth='2.4' />
	</svg>
)

const ChevDown = () => (
	<svg width='30' height='18' viewBox='0 0 30 18'>
		<path d='M1 2l14 13L29 2' fill='none' stroke='#3b3a39' strokeWidth='2' />
	</svg>
)

const ChevRight = () => (
	<svg width='16' height='28' viewBox='0 0 16 28'>
		<path d='M1 1l13 13L1 27' fill='none' stroke='#3b3a39' strokeWidth='2' />
	</svg>
)

const TableGlyph = () => (
	<svg width='30' height='30' viewBox='0 0 30 30'>
		<rect x='1.5' y='1.5' width='27' height='27' rx='5' fill='none' stroke='#252423' strokeWidth='2.4' />
		<path d='M10 2v26M20 2v26M2 10h26M2 20h26' stroke='#252423' strokeWidth='2.2' />
	</svg>
)

const CalcGlyph = () => (
	<svg width='30' height='34' viewBox='0 0 30 34'>
		<rect x='1.5' y='1.5' width='27' height='31' rx='6' fill='none' stroke='#252423' strokeWidth='2.4' />
		<rect x='7' y='6' width='16' height='7' rx='2' fill='none' stroke='#252423' strokeWidth='2' />
		{[18, 24].map(y => (
			<path key={y} d={`M7 ${y}h2.6M14 ${y}h2.6M21 ${y}h2.6`} stroke='#252423' strokeWidth='3.2' />
		))}
	</svg>
)

const DateGlyph = () => (
	<svg width='30' height='28' viewBox='0 0 30 28'>
		<rect x='1.5' y='2' width='27' height='24' rx='4' fill='none' stroke='#252423' strokeWidth='2.2' />
		<path d='M2 9h26' stroke='#252423' strokeWidth='2.2' />
		<path d='M8 14h2M14 14h2M20 14h2M8 20h2M14 20h2' stroke='#252423' strokeWidth='2.4' />
	</svg>
)

const SumGlyph = () => (
	<svg width='28' height='34' viewBox='0 0 28 34'>
		<path d='M26 3H3l12 14L3 31h23' fill='none' stroke='#252423' strokeWidth='2.4' />
	</svg>
)

const CalendarMini = () => (
	<svg width='24' height='24' viewBox='0 0 24 24'>
		<rect x='1' y='3' width='22' height='19' fill='none' stroke='#f0f0fa' strokeWidth='1.6' />
		<path d='M1 8h22' stroke='#f0f0fa' strokeWidth='2' />
		<path d='M4 12h16M4 15h16M4 18h16M7 10v10M11 10v10M15 10v10M19 10v10' stroke='#d8d8ee' strokeWidth='1' />
	</svg>
)

const ExpandGlyph = ({ open }: { open: boolean }) => (
	<TableExpand viewBox='0 0 16 18'>
		<rect x='1' y='1' width='14' height='16' fill='none' stroke='#a0a0a0' strokeWidth='1.6' />
		<path d={open ? 'M4 9h8' : 'M4 9h8M8 5v8'} stroke='#a0a0a0' strokeWidth='1.6' />
	</TableExpand>
)

const railGrey = '#7c7a78'

const railIcons: ReactNode[] = [
	<svg key='r' width='36' height='36' viewBox='0 0 36 36'>
		<path d='M2 1v33h33' fill='none' stroke='#111' strokeWidth='2.4' />
		<path d='M7 10h7v21H7zM17 15h6v16h-6zM26 5h7v26h-7z' fill='none' stroke='#111' strokeWidth='2.2' />
	</svg>,
	<svg key='t' width='40' height='38' viewBox='0 0 40 38'>
		<rect x='1.5' y='1.5' width='37' height='35' fill='none' stroke={railGrey} strokeWidth='2.4' />
		<path d='M2 7h36M2 15h36M2 25h36M14 7v30M26 7v30' stroke={railGrey} strokeWidth='2.2' />
	</svg>,
	<svg key='m' width='46' height='46' viewBox='0 0 46 46'>
		<path d='M26 3h18v18H26zM2 16h20v18H2zM26 26h18v18H26z' fill='none' stroke={railGrey} strokeWidth='2.4' />
		<path d='M26 12h18M2 25h20M26 35h18M26 8H12v8M12 34v7h14' fill='none' stroke={railGrey} strokeWidth='2.2' />
	</svg>,
	<svg key='d' width='48' height='52' viewBox='0 0 48 52'>
		<path d='M12 26V4a2 2 0 0 1 2-2h14l10 10v16M28 2v10h10M36 26c3 2 3 8-1 10' fill='none' stroke={railGrey} strokeWidth='2.2' />
		<text x='2' y='41' fontFamily={UI} fontSize='16' fontWeight='700' fill={railGrey}>DAX</text>
	</svg>,
	<svg key='f' width='56' height='54' viewBox='0 0 56 54'>
		<path d='M12 26V6a3 3 0 0 1 3-3h13l11 10v13M27 3v11h12' fill='none' stroke={railGrey} strokeWidth='2.2' />
		<text x='2' y='43' fontFamily={UI} fontSize='17' fontWeight='700' fill={railGrey}>TMDL</text>
	</svg>,
]

/* report gallery, one 46 x 46 drawing per visual type */

const Ax = <path d='M2 0v45h44' fill='none' stroke={INK} strokeWidth='2.4' />

const Bx = ({ x, y, w, h, f = '#fff', s = INK }: { x: number; y: number; w: number; h: number; f?: string; s?: string }) => (
	<rect x={x} y={y} width={w} height={h} fill={f} stroke={s} strokeWidth='2' />
)

const vizIcons: { node: ReactNode; sel?: boolean }[] = [
	{ node: <>{Ax}<Bx x={2} y={5} w={12} h={12} /><Bx x={14} y={5} w={16} h={12} f={BLUE} s={BLUE_D} /><Bx x={2} y={24} w={18} h={12} /><Bx x={20} y={24} w={20} h={12} f={GREY} s='#8a8886' /></> },
	{ node: <>{Ax}<Bx x={9} y={26} w={12} h={19} /><Bx x={9} y={8} w={12} h={18} f={BLUE} s={BLUE_D} /><Bx x={30} y={24} w={12} h={21} /><Bx x={30} y={2} w={12} h={22} f={GREY} s='#8a8886' /></> },
	{ node: <><path d='M2 0v45h44' fill='none' stroke={INK} strokeWidth='2.4' /><Bx x={2} y={2} w={42} h={9} f={BLUE} s={BLUE_D} /><Bx x={2} y={11} w={26} h={8} /><Bx x={2} y={22} w={20} h={8} f={GREY} s='#8a8886' /><Bx x={2} y={30} w={32} h={8} /></> },
	{ node: <>{Ax}<Bx x={4} y={2} w={10} h={43} f={BLUE} s={BLUE_D} /><Bx x={14} y={16} w={8} h={29} /><Bx x={26} y={26} w={8} h={19} f={GREY} s='#8a8886' /><Bx x={35} y={12} w={9} h={33} /></> },
	{ node: <>{Ax}<Bx x={2} y={4} w={12} h={10} /><Bx x={14} y={4} w={28} h={10} f={BLUE} s={BLUE_D} /><Bx x={2} y={26} w={26} h={10} /><Bx x={28} y={26} w={14} h={10} f={GREY} s='#8a8886' /></> },
	{ node: <>{Ax}<Bx x={9} y={30} w={12} h={15} /><Bx x={9} y={2} w={12} h={28} f={BLUE} s={BLUE_D} /><Bx x={30} y={16} w={12} h={29} /><Bx x={30} y={2} w={12} h={14} f={GREY} s='#8a8886' /></> },

	{ node: <>{Ax}<path d='M3 30l14-16 14 12 14-12' fill='none' stroke={INK} strokeWidth='2.2' /><path d='M3 36l16-12 10-8 14 14' fill='none' stroke={BLUE_D} strokeWidth='2.2' /></> },
	{ node: <><path d='M2 32l14-14 14 14 14-16 2 29H2z' fill='#fff' stroke={INK} strokeWidth='2' /><path d='M30 14l14-12 2 43H36z' fill={GREY} stroke='#8a8886' strokeWidth='2' /><path d='M2 34l14-6 10 6 12 11H2z' fill={BLUE} stroke={BLUE_D} strokeWidth='2' />{Ax}</> },
	{ node: <>{Ax}<path d='M2 8l14 14 16-12 14 8v12l-14-6-16 12L2 24z' fill={BLUE} stroke={BLUE_D} strokeWidth='2' /></> },
	{ node: <>{Ax}<path d='M2 6h44v18l-14-8-14 12L2 22z' fill={BLUE} stroke={BLUE_D} strokeWidth='2' /></> },
	{ node: <>{Ax}<Bx x={9} y={2} w={12} h={43} f={BLUE} s={BLUE_D} /><Bx x={30} y={20} w={12} h={25} /><Bx x={30} y={2} w={12} h={18} f={GREY} s='#8a8886' /><path d='M3 44l14-12 12 6 16-14' fill='none' stroke={INK} strokeWidth='2.4' /></> },
	{ node: <>{Ax}<Bx x={8} y={26} w={12} h={19} f={BLUE} s={BLUE_D} /><Bx x={20} y={2} w={10} h={43} /><Bx x={30} y={12} w={10} h={33} f={GREY} s='#8a8886' /><path d='M3 44l14-16 12 8 16-14' fill='none' stroke={INK} strokeWidth='2.4' /></> },

	{ node: <>{Ax}<path d='M6 8c12 0 12 10 20 10s8-10 18-10v10c-10 0-10 8-18 8S14 18 6 18z' fill={GREY} stroke='#8a8886' strokeWidth='2' /><path d='M6 24c12 0 12 14 20 14s8-14 18-14v10c-10 0-10 8-18 8S14 34 6 34z' fill={BLUE} stroke={BLUE_D} strokeWidth='2' /><path d='M6 30h10v6H6zM34 32h10v6H34z' fill='#e8820c' /></> },
	{ node: <>{Ax}<Bx x={8} y={16} w={10} h={29} /><Bx x={18} y={16} w={10} h={10} /><Bx x={26} y={2} w={8} h={24} f={BLUE_D} s={BLUE_D} /><Bx x={34} y={2} w={10} h={43} /></> },
	{ node: <><Bx x={1} y={2} w={44} h={9} f={BLUE} s={BLUE_D} /><Bx x={7} y={11} w={32} h={15} f={BLUE} s={BLUE_D} /><Bx x={14} y={26} w={18} h={16} f={BLUE} s={BLUE_D} /></> },
	{ node: <>{Ax}<rect x='9' y='9' width='9' height='7' fill={BLUE} /><rect x='24' y='16' width='9' height='7' fill={BLUE} /><rect x='34' y='2' width='9' height='7' fill={INK} /><rect x='8' y='30' width='9' height='7' fill={INK} /><rect x='35' y='26' width='9' height='7' fill={BLUE} /></> },
	{ node: <><circle cx='23' cy='23' r='22' fill='#fff' stroke={INK} strokeWidth='2' /><path d='M23 23V1a22 22 0 0 1 22 24z M23 23l22 2a22 22 0 0 1-8 14z' fill={BLUE} stroke={BLUE_D} strokeWidth='2' /></> },
	{ node: <><circle cx='23' cy='23' r='16' fill='none' stroke={BLUE} strokeWidth='11' /><path d='M23 7A16 16 0 0 0 7 23' fill='none' stroke={GREY} strokeWidth='11' /><circle cx='23' cy='23' r='22' fill='none' stroke={BLUE_D} strokeWidth='2' /><circle cx='23' cy='23' r='10' fill='none' stroke={BLUE_D} strokeWidth='2' /></> },

	{ node: <><rect x='1' y='2' width='22' height='42' fill={BLUE} stroke={BLUE_D} strokeWidth='2' /><path d='M1 22h22' stroke={BLUE_D} strokeWidth='2' /><rect x='23' y='2' width='22' height='42' fill='#fff' stroke={INK} strokeWidth='2' /><path d='M23 14h22M34 14v30M34 28h11' stroke={INK} strokeWidth='2' /></> },
	{ node: <><circle cx='25' cy='20' r='16' fill='#fff' stroke={INK} strokeWidth='2' /><path d='M16 12c4-4 10-2 12 2s-4 2-8 2-6-2-4-4zM28 22c4-2 8 0 6 4s-6 4-8 2 0-4 2-6z' fill='#3a9a52' /><path d='M14 4A20 20 0 0 0 10 36M12 44h28M25 38v6' fill='none' stroke={INK} strokeWidth='2' /></> },
	{ node: <><path d='M2 4l12-2 8 6 12-4 10 2v14l-4 12-12 2-6 6-8-4-8 2-4-10 4-8z' fill={GREY} stroke={INK} strokeWidth='2' /><path d='M4 4l16 2 2 14H10z M26 22h18l-2 10-14 4z' fill={BLUE} stroke={BLUE_D} strokeWidth='2' /></> },
	{ node: <><path d='M30 0L2 42l26-6 14 10z' fill='#3c9dd0' /><path d='M30 0l12 46-14-10z' fill='#6cc3ea' /><path d='M28 36l14 10-4-16z' fill='#0f6cbd' /></> },
	{ node: <><path d='M1 36a22 22 0 0 1 44 0H33a10 10 0 0 0-20 0z' fill='#fff' stroke={INK} strokeWidth='2' /><path d='M12 20a20 20 0 0 1 22 0l11 16H33a10 10 0 0 0-20 0z' fill={BLUE} stroke={BLUE_D} strokeWidth='2' /><path d='M20 36l14-10' stroke={INK} strokeWidth='3' /></> },
	{ node: <><rect x='1' y='6' width='44' height='34' fill='#fff' stroke={INK} strokeWidth='2' /><text x='23' y='33' textAnchor='middle' fontFamily={UI} fontSize='22' fill='#2b88d8'>123</text><path d='M6 36h34' stroke='#2b88d8' /></> },

	{ node: <><rect x='1' y='4' width='44' height='38' fill='#fff' stroke={INK} strokeWidth='2' /><path d='M9 6v34' stroke='#8a8886' /><path d='M14 14h24M14 27h24' stroke={BLUE_D} strokeWidth='4' /><path d='M14 20h14M14 33h14' stroke='#8a8886' strokeWidth='2' /></> },
	{ node: <><rect x='1' y='4' width='44' height='36' fill='#fff' stroke={INK} strokeWidth='2' /><path d='M8 28l8-12 8 12z' fill='#3a9a52' /><path d='M26 14h16l-8 12z' fill='#d13438' /><path d='M6 34h34' stroke='#8a8886' strokeWidth='2' /></> },
	{ node: <><rect x='1' y='2' width='44' height='38' fill='#fff' stroke={INK} strokeWidth='2' /><rect x='1' y='2' width='44' height='7' fill={GREY} stroke={INK} strokeWidth='2' /><rect x='9' y='14' width='10' height='6' fill={GREY} stroke='#8a8886' /><rect x='9' y='26' width='10' height='6' fill={GREY} stroke='#8a8886' /><path d='M24 22h24L38 33v12h-5V33z' fill='#f3f2f1' stroke={INK} strokeWidth='2' /></> },
	{ node: <><rect x='1' y='3' width='44' height='38' fill='#fff' stroke={INK} strokeWidth='2' /><rect x='1' y='3' width='44' height='7' fill={GREY} stroke={INK} strokeWidth='2' /><path d='M1 20h44M1 30h44M16 10v31M30 10v31' stroke='#8a8886' strokeWidth='2' /></> },
	{ sel: true, node: <><rect x='1' y='3' width='44' height='38' fill='#fff' stroke={INK} strokeWidth='2' /><rect x='1' y='3' width='44' height='8' fill='#8a8886' /><rect x='1' y='30' width='44' height='11' fill='#4a9bdc' /><rect x='30' y='11' width='15' height='30' fill='#4a9bdc' /><rect x='1' y='11' width='14' height='30' fill='#4a9bdc' /><path d='M1 20h44M1 30h44M16 10v31M30 10v31' stroke='#fff' strokeWidth='2' /></> },
	{ node: <text x='23' y='39' textAnchor='middle' fontFamily={UI} fontSize='42' fontWeight='700' fill='#2b88d8'>R</text> },

	{ node: <text x='23' y='38' textAnchor='middle' fontFamily={UI} fontSize='36' fontWeight='700' fill='#2b88d8'>Py</text> },
	{ node: <>{Ax}<path d='M2 8h30M2 22h22M2 34h14' stroke='#2b88d8' strokeWidth='2' /><ellipse cx='37' cy='8' rx='8' ry='5' fill={BLUE} stroke={BLUE_D} strokeWidth='2' /><ellipse cx='27' cy='22' rx='5' ry='4' fill={GREY} stroke='#8a8886' strokeWidth='2' /><ellipse cx='18' cy='34' rx='5' ry='4' fill={GREY} stroke='#8a8886' strokeWidth='2' /></> },
	{ node: <><Bx x={1} y={18} w={14} h={10} f={BLUE} s={BLUE_D} /><Bx x={30} y={2} w={15} h={10} f={BLUE} s={BLUE_D} /><Bx x={30} y={18} w={15} h={10} f={BLUE} s={BLUE_D} /><Bx x={30} y={34} w={15} h={10} f={BLUE} s={BLUE_D} /><path d='M15 23h15M23 7v32M23 7h7M23 39h7' fill='none' stroke={INK} strokeWidth='2' /></> },
	{ node: <path d='M1 4h44v26H18l-8 12V30H1z' fill='#fff' stroke={BLUE_D} strokeWidth='2.4' /> },
	{ node: <><path d='M6 4h22l12 10v28H6z M28 4v10h12' fill='#fff' stroke={INK} strokeWidth='2' /><ellipse cx='9' cy='16' rx='8' ry='5' fill={BLUE} stroke={BLUE_D} strokeWidth='2' /><path d='M12 28h20M16 36h16' stroke='#2b88d8' strokeWidth='2' /></> },
	{ node: <><path d='M10 2h26v18a13 13 0 0 1-26 0z' fill='#fff' stroke={INK} strokeWidth='2' /><rect x='10' y='2' width='26' height='6' fill={BLUE} stroke={BLUE_D} strokeWidth='2' /><path d='M10 8H1v6a9 9 0 0 0 9 9M36 8h9v6a9 9 0 0 1-9 9M23 33v6' fill='none' stroke={INK} strokeWidth='2' /><rect x='12' y='39' width='22' height='5' fill={BLUE} stroke={BLUE_D} strokeWidth='2' /></> },

	{ node: <><path d='M5 2h26l10 10v32H5z M31 2v10h10' fill='#f3f2f1' stroke={INK} strokeWidth='3' /><path d='M11 28h6v12h-6zM20 32h6v8h-6zM29 22h6v18h-6z' fill={INK} /></> },
	{ node: <><rect x='3' y='12' width='42' height='30' fill='#f3f2f1' stroke={INK} strokeWidth='2' /><text x='26' y='36' textAnchor='middle' fontFamily={UI} fontSize='20' fill='#2b88d8'>123</text><path d='M8 0h14l-6 9h7L4 22l5-9H1z' fill='#f7b733' stroke='#d9730d' strokeWidth='1.6' /></> },
	{ node: <><Bx x={24} y={2} w={18} h={14} f='#f3f2f1' s='#8a8886' /><Bx x={4} y={18} w={18} h={20} f='#f3f2f1' s='#8a8886' /><path d='M22 24h24L37 34v11h-6V34z' fill='#f3f2f1' stroke={INK} strokeWidth='2' /><path d='M8 0h14l-6 9h7L4 22l5-9H1z' fill='#f7b733' stroke='#d9730d' strokeWidth='1.6' /></> },
	{ node: <><path d='M4 6h40v34H4z' fill='#fff' stroke={BLUE_D} strokeWidth='2.4' /><path d='M14 38c0-12 6-8 12-12s6-10 12-10v22z' fill={BLUE} /><path d='M0 0h14v10l-7 6-7-6z' fill='#d9730d' /><rect x='4' y='4' width='6' height='4' fill='#fff' /><circle cx='38' cy='36' r='6' fill='#d9730d' /><circle cx='43' cy='26' r='3' fill='#d9730d' /></> },
	{ node: <path d='M1 23L13 11l10 9 10-10 12 13-12 12-10-9-10 9zM23 10l10 12-10 13-10-13z' fill='none' stroke='#8c3fae' strokeWidth='2.4' /> },
	{ node: <path d='M1 8h24l20 16-14 12H1l16-14zM18 22l12-14M12 36l14-14' fill='none' stroke='#2b88d8' strokeWidth='2.4' /> },
]

const fieldWells: { label: string; top: number; items: string[] }[] = [
	{ label: 'Rows', top: 23, items: ['Archive_Date', 'Speciality', 'Age_Profile', 'Time_Bands'] },
	{ label: 'Columns', top: 27, items: ['Case_Type'] },
	{ label: 'Values', top: 28, items: ['Sum of Total'] },
]

const filterFields = ['Age_Profile', 'Archive_Date', 'Case_Type', 'Speciality', 'Sum of Total', 'Time_Bands']

type TreeNode =
	| { kind: 'table'; name: string; open: boolean; badge?: boolean }
	| { kind: 'item'; name: string; on?: boolean; type?: 'calc' | 'date' | 'sum'; chev?: boolean; warn?: boolean }

const tree: TreeNode[] = [
	{ kind: 'table', name: 'All_Data', open: true, badge: true },
	{ kind: 'item', name: 'Adult_Child' },
	{ kind: 'item', name: 'Age_Profile', on: true },
	{ kind: 'item', name: 'Archive_Date', on: true, type: 'date', chev: true },
	{ kind: 'item', name: 'avg waiting list', type: 'calc' },
	{ kind: 'item', name: 'avg_med_waitin...', type: 'calc' },
	{ kind: 'item', name: 'Case_Type', on: true },
	{ kind: 'item', name: 'Case_type 2' },
	{ kind: 'item', name: 'Dynamic Title', type: 'calc' },
	{ kind: 'item', name: 'Last months w...', type: 'calc' },
	{ kind: 'item', name: 'Median waiting...', type: 'calc' },
	{ kind: 'item', name: 'nodataleft', type: 'calc', warn: true },
	{ kind: 'item', name: 'PY Latest Mont...', type: 'calc' },
	{ kind: 'item', name: 'Source.Name' },
	{ kind: 'item', name: 'Speciality', on: true },
	{ kind: 'item', name: 'Specialty_HIPE', type: 'sum' },
	{ kind: 'item', name: 'Time_Bands', on: true },
	{ kind: 'item', name: 'Total', on: true, type: 'sum' },
	{ kind: 'table', name: 'calculation method', open: false },
	{ kind: 'table', name: 'Mapping_Specialty', open: true },
	{ kind: 'item', name: 'Specialty' },
	{ kind: 'item', name: 'Specialty Group' },
]

const SAT = 'Saturday, October 31, 2020'
const AE = 'Accident & Emergency'
const AN = 'Anaesthetics'

type Row = {
	dark?: boolean
	date?: string
	dateOpen?: boolean
	spec?: string
	specOpen?: boolean
	age?: string
	ageMark?: '-' | '+'
	band?: string
	day?: string
	out: string
}

const rows: Row[] = [
	{ dark: true, date: SAT, dateOpen: true, spec: AE, specOpen: true, age: '0-15', ageMark: '-', band: '0-3 Months', out: '28' },
	{ out: '19' },
	{ dark: true, date: SAT, spec: AE, age: '0-15', band: '6-9 Months', out: '1' },
	{ date: SAT, spec: AE, age: '0-15', band: 'Total', out: '48' },
	{ dark: true, date: SAT, spec: AE, age: '16-64', ageMark: '-', band: '0-3 Months', out: '346' },
	{ out: '318' },
	{ dark: true, date: SAT, spec: AE, age: '16-64', band: '6-9 Months', out: '61' },
	{ date: SAT, spec: AE, age: '16-64', band: 'Total', out: '725' },
	{ dark: true, date: SAT, spec: AE, age: '65+', ageMark: '+', out: '266' },
	{ date: SAT, spec: AE, age: 'Total', out: '1039' },
	{ dark: true, date: SAT, spec: AN, specOpen: true, age: '0-15', ageMark: '+', out: '4' },
	{ day: '81', out: '154' },
	{ dark: true, date: SAT, spec: AN, age: '16-64', band: '12-15 Months', day: '12', out: '99' },
	{ day: '3', out: '83' },
	{ dark: true, date: SAT, spec: AN, age: '16-64', band: '18+ Months', day: '5', out: '687' },
	{ day: '60', out: '94' },
	{ dark: true, date: SAT, spec: AN, age: '16-64', band: '6-9 Months', day: '25', out: '125' },
	{ day: '40', out: '155' },
	{ dark: true, date: SAT, spec: AN, age: '16-64', band: 'Total', day: '226', out: '1397' },
	{ out: '' },
]

const heads = ['Archive_Date', 'Speciality', 'Age_Profile', 'Time_Bands', 'Day Case', 'Inpatient', 'outpatient']

const slicers = ['Speciality', 'Case_Type', 'Time_Bands', 'Age_Profile']

const focusTools: { gap?: boolean; d: string; c: string }[] = [
	{ d: 'M20 42V4M8 18L20 4l12 14', c: '#605e5c' },
	{ d: 'M20 2v38M8 26l12 14 12-14', c: '#605e5c' },
	{ d: 'M14 2v36M26 2v36M8 28l6 10 6-10M20 28l6 10 6-10', c: '#c8c6c4' },
	{ d: 'M20 2v14M10 16h20v10M10 16v12M4 30l6 10 6-10M24 30l6 10 6-10', c: '#c8c6c4' },
	{ gap: true, d: 'M4 6h32L24 22v18h-8V22zM4 3h32', c: '#605e5c' },
	{ d: 'M4 4h14M4 4v36h32V24M4 22h16v18M24 20L36 6M28 4h10v10', c: '#605e5c' },
]

export default function App() {
	return (
		<Shell>
			<GlobalStyle />
			<TitleBar>
				<TitleLeft>
					<svg width='37' height='38' viewBox='0 0 37 38'>
						<path d='M2 2h33v34H5l-3-3z' fill='none' stroke='#fff' strokeWidth='2.4' />
						<path d='M9 2v13h19V2M8 36V23h20v13' fill='none' stroke='#fff' strokeWidth='2.4' />
					</svg>
					<svg width='30' height='38' viewBox='0 0 30 38'>
						<path d='M3 16h14a10 10 0 0 1 2 20M3 16l9-10M3 16l9 8' fill='none' stroke='#fff' strokeWidth='2.2' />
					</svg>
					<svg width='30' height='38' viewBox='0 0 30 38'>
						<path d='M27 16H13a10 10 0 0 0-2 20M27 16l-9-10M27 16l-9 8' fill='none' stroke='#8a8886' strokeWidth='2.2' />
					</svg>
					<SavedText>hh • Last saved: Today at 4:50 PM</SavedText>
					<TitleCaret />
				</TitleLeft>
				<TopSearch>
					<LensLeft c='#323130' />
					Search
				</TopSearch>
				<TitleRight>
					<Email>M.AbdulAti16.167@compit.aun.edu.eg</Email>
					<Avatar>
						<svg width='34' height='40' viewBox='0 0 34 40'>
							<circle cx='17' cy='10' r='7' fill='none' stroke='#252423' strokeWidth='3' />
							<path d='M3 22h28v3c0 8-6 13-14 13S3 33 3 25z' fill='none' stroke='#252423' strokeWidth='3' />
						</svg>
					</Avatar>
					<WinBtn>
						<svg width='26' height='26' viewBox='0 0 26 26'><path d='M0 13h26' stroke='#fff' strokeWidth='2.4' /></svg>
					</WinBtn>
					<WinBtn>
						<svg width='26' height='32' viewBox='0 0 26 32'>
							<rect x='2' y='8' width='17' height='21' rx='3' fill='none' stroke='#fff' strokeWidth='2.2' />
							<path d='M7 3h12a5 5 0 0 1 5 5v14' fill='none' stroke='#fff' strokeWidth='2.2' />
						</svg>
					</WinBtn>
					<WinBtn>
						<svg width='26' height='26' viewBox='0 0 26 26'><path d='M1 1l24 24M25 1L1 25' stroke='#fff' strokeWidth='2.2' /></svg>
					</WinBtn>
				</TitleRight>
			</TitleBar>

			<TabRow>
				<RibbonTab $w={146}><TabLabel>File</TabLabel></RibbonTab>
				<RibbonTab $w={173}><TabLabel $active>Home</TabLabel></RibbonTab>
				<RibbonTab $w={166}><TabLabel>Insert</TabLabel></RibbonTab>
				<RibbonTab $w={228}><TabLabel>Modeling</TabLabel></RibbonTab>
				<RibbonTab $w={151}><TabLabel>View</TabLabel></RibbonTab>
				<RibbonTab $w={219}><TabLabel>Optimize</TabLabel></RibbonTab>
				<RibbonTab $w={110}><TabLabel>Help</TabLabel></RibbonTab>
				<RibbonTab $w={187} $pad={40} $contextual><TabLabel>Format</TabLabel></RibbonTab>
				<RibbonTab $w={248} $pad={38} $contextual><TabLabel>Data / Drill</TabLabel></RibbonTab>
				<ShareButton>
					<svg width='44' height='46' viewBox='0 0 44 46'>
						<path d='M2 18v26h30v-2M2 44h30' fill='none' stroke='#fff' strokeWidth='2.4' />
						<path d='M22 2l18 18-16 16v-9c-8 0-14 4-16 10 0-12 6-20 16-22z' fill='none' stroke='#fff' strokeWidth='2.4' />
					</svg>
					Share
					<svg width='24' height='16' viewBox='0 0 24 16'><path d='M1 1l11 13L23 1' fill='none' stroke='#fff' strokeWidth='2.2' /></svg>
				</ShareButton>
			</TabRow>

			<Ribbon>
				<RibbonGroup $w={400} $pad={15}>
					<GroupButtons>
						<BigBtn item={{ w: 110, icon: 'paste', muted: true, label: 'Paste' }} />
						<SmallCol>
							<SmallItem>
								<svg width='34' height='42' viewBox='0 0 34 42'>
									<path d='M10 0l10 28M24 0L14 28' stroke={INK} strokeWidth='2' />
									<circle cx='10' cy='34' r='6' fill='none' stroke='#2b88d8' strokeWidth='3' />
									<circle cx='24' cy='34' r='6' fill='none' stroke='#2b88d8' strokeWidth='3' />
								</svg>
								Cut
							</SmallItem>
							<SmallItem>
								<svg width='38' height='42' viewBox='0 0 38 42'>
									<path d='M14 34H2V2h12l4 6' fill='none' stroke={INK} strokeWidth='2.6' />
									<path d='M12 10h12l10 10v20H12z M24 10v10h10' fill='#fafafa' stroke={INK} strokeWidth='2.6' />
									<path d='M18 26h10M18 32h10' stroke='#8a8886' strokeWidth='2' />
								</svg>
								Copy
							</SmallItem>
							<SmallItem>
								<svg width='38' height='42' viewBox='0 0 38 42'>
									<path d='M24 14L34 0l4 6-10 14z' fill='#fafafa' stroke={INK} strokeWidth='2.4' />
									<path d='M12 10l20 14-4 6-20-14z' fill='#fafafa' stroke={INK} strokeWidth='2.4' />
									<path d='M8 16l20 14-12 12-16-16z' fill='#f7b733' stroke='#d9730d' strokeWidth='2.4' />
								</svg>
								Format painter
							</SmallItem>
						</SmallCol>
					</GroupButtons>
					<GroupLabel $pad={15}>Clipboard</GroupLabel>
				</RibbonGroup>
				{ribbonGroups.map(g => (
					<RibbonGroup key={g.title} $w={g.w} $pad={g.pad}>
						<GroupButtons>
							{g.items.map((it, i) => <BigBtn key={i} item={it} />)}
						</GroupButtons>
						<GroupLabel $pad={g.pad}>{g.title}</GroupLabel>
					</RibbonGroup>
				))}
				<Collapse viewBox='0 0 20 14'>
					<path d='M2 12l8-9 8 9' fill='none' stroke='#252423' strokeWidth='3' />
				</Collapse>
			</Ribbon>

			<Main>
				<Rail>
					{railIcons.map((ic, i) => (
						<RailItem key={i} $active={i === 0}>{ic}</RailItem>
					))}
				</Rail>
				<CenterCol>
					<CenterTop>
						<Canvas>
							<ReportPage>
								<DotGrid />
								<SlicerPanel>
									<PanelTitle>detailed</PanelTitle>
									<DateLabel>Archive_Date</DateLabel>
									<DateRow>
										<DateBox>3/23/2018<CalendarMini /></DateBox>
										<DateBox>11/23/2020<CalendarMini /></DateBox>
									</DateRow>
									<RangeSlider>
										<RangeHandle $at={3} />
										<RangeHandle $at={414} />
									</RangeSlider>
									<SlicerStack>
										{slicers.map(name => (
											<Slicer key={name}>
												<SlicerLabel>{name}</SlicerLabel>
												<SlicerHide $x={454} $y={6} viewBox='0 0 22 13'>
													<path d='M1 1l10 10L21 1' fill='none' stroke='#605e5c' strokeWidth='1.4' />
												</SlicerHide>
												<SlicerBox>
													All
													<svg width='34' height='20' viewBox='0 0 34 20'>
														<path d='M1 1l16 17L33 1' fill='none' stroke='#3a2a70' strokeWidth='1.8' />
													</svg>
												</SlicerBox>
											</Slicer>
										))}
									</SlicerStack>
								</SlicerPanel>
								<RightCol>
									<VisualTitleRow>
										<InfoBadge>i</InfoBadge>
										<VisualName>summary</VisualName>
									</VisualTitleRow>
									<VisualFrame>
										<FocusBar>
											{focusTools.map((t, i) => (
												<FocusBtn key={i} $gap={t.gap}>
													<svg width='40' height='44' viewBox='0 0 40 44'>
														<path d={t.d} fill='none' stroke={t.c} strokeWidth='2.6' />
													</svg>
												</FocusBtn>
											))}
											<FocusBtn>
												<svg width='40' height='10' viewBox='0 0 40 10'>
													<path d='M6 5h4M18 5h4M30 5h4' stroke='#605e5c' strokeWidth='5' />
												</svg>
											</FocusBtn>
										</FocusBar>
										<SelectBox>
											<SelHandle $v='top: -3px' $h='left: -3px' />
											<SelHandle $v='top: -3px' $h='left: 49%' />
											<SelHandle $v='top: -3px' $h='right: -3px' />
											<SelHandle $v='bottom: -3px' $h='left: -3px' />
											<SelHandle $v='bottom: -3px' $h='left: 49%' />
											<SelHandle $v='bottom: -3px' $h='right: -3px' />
										</SelectBox>
										<TableWrap>
											<TableView>
												<HeadRow>
													{heads.map(h => (
														<HeadCell key={h} $pad={h === 'outpatient' ? 10 : 0}>{h}</HeadCell>
													))}
													<SortMark />
												</HeadRow>
												{rows.map((r, i) => (
													<BodyRow key={i}>
														<TextCell $dark={r.dark}>
															{r.dateOpen && <ExpandGlyph open />}
															{r.date}
														</TextCell>
														<TextCell $dark={r.dark} $pad={43} $size={24}>
															{r.specOpen && <ExpandGlyph open />}
															{r.spec}
														</TextCell>
														<TextCell $dark={r.dark} $pad={42} $size={23}>
															{r.ageMark && <ExpandGlyph open={r.ageMark === '-'} />}
															{r.age}
														</TextCell>
														<TextCell $dark={r.dark} $short $light={r.band !== 'Total'} $size={r.band === 'Total' ? 23 : 24}>
															{r.band}
														</TextCell>
														<NumCell $first>{r.day}</NumCell>
														<NumCell />
														<NumCell>{r.out}</NumCell>
													</BodyRow>
												))}
											</TableView>
											<VScroll><VThumb /></VScroll>
											<HScroll />
										</TableWrap>
									</VisualFrame>
								</RightCol>
							</ReportPage>
						</Canvas>
						<FiltersPanel>
							<PaneHead $pad={26} $right={24}>
								<Funnel />
								<FilterIconGap>Filters</FilterIconGap>
								<PushRight $gap={44}>
									<svg width='34' height='22' viewBox='0 0 34 22'>
										<path d='M2 12C8 2 26 2 32 12' fill='none' stroke='#252423' strokeWidth='2.4' />
										<circle cx='17' cy='13' r='5' fill='none' stroke='#252423' strokeWidth='2.6' />
									</svg>
									<Chevrons />
								</PushRight>
							</PaneHead>
							<FilterSearchWrap>
								<FilterSearch>
									<LensLeft />
									Search
								</FilterSearch>
							</FilterSearchWrap>
							<FilterBody>
								<FilterTitle>
									Filters on this visual
									<Dots3>...</Dots3>
								</FilterTitle>
								{filterFields.map(f => (
									<FilterCard key={f}>
										{f}
										<br />
										is (All)
									</FilterCard>
								))}
								<FilterCard $add>Add data fields here</FilterCard>
								<PaneScroll $top={20} $h={913} />
							</FilterBody>
						</FiltersPanel>
					</CenterTop>
					<PageBar>
						<ViewTabs>
							<ViewIcon $x={31} $y={17} $w={46} $h={36} viewBox='0 0 46 36'>
								<path d='M2 2h42v26H2zM2 4h42M23 28v6M17 34h12' fill='none' stroke='#605e5c' strokeWidth='3' />
							</ViewIcon>
							<ViewMark />
							<ViewIcon $x={151} $y={11} $w={30} $h={50} viewBox='0 0 30 50'>
								<rect x='2' y='2' width='26' height='46' rx='2' fill='none' stroke='#605e5c' strokeWidth='3' />
								<rect x='13' y='36' width='4' height='4' fill='#605e5c' />
							</ViewIcon>
							<ViewIcon $x={234} $y={31} $w={10} $h={22} viewBox='0 0 10 22'>
								<path d='M10 0v22L0 11z' fill='#c8c6c4' />
							</ViewIcon>
							<ViewIcon $x={288} $y={31} $w={10} $h={22} viewBox='0 0 10 22'>
								<path d='M0 0v22l10-11z' fill='#c8c6c4' />
							</ViewIcon>
						</ViewTabs>
						<PageTab $w={225}>summary</PageTab>
						<PageTab $w={212} $active>detailed</PageTab>
						<PageTab $w={191}>Page 2</PageTab>
						<AddPage>
							<svg width='28' height='28' viewBox='0 0 28 28'>
								<path d='M14 1v26M1 14h26' stroke='#fff' strokeWidth='6' />
							</svg>
						</AddPage>
					</PageBar>
				</CenterCol>
				<VizPanel>
					<VizUpper>
						<PaneHead $pad={22} $right={22}>
							Visualizations
							<PushRight><Chevrons /></PushRight>
						</PaneHead>
						<BuildTitle>Build visual</BuildTitle>
						<PaneTabs>
							<PaneSel>
								<svg width='60' height='52' viewBox='0 0 60 52'>
									<path d='M2 2h50' stroke='#252423' strokeWidth='2' />
									<rect x='1' y='11' width='58' height='15' fill={TEAL} stroke='#252423' strokeWidth='2' strokeDasharray='4 3' />
									<rect x='1' y='34' width='58' height='15' fill={TEAL} stroke='#252423' strokeWidth='2' strokeDasharray='4 3' />
								</svg>
							</PaneSel>
							<PaneTool $x={199} viewBox='0 0 62 56'>
								<path d='M2 52V22h16v-18h22v16h18' fill='none' stroke='#252423' strokeWidth='3' />
								<path d='M22 50c8 6 18 2 22-8L60 24c-8 2-18 8-24 16-6 0-10 4-14 10z' fill='#f3f2f1' stroke='#252423' strokeWidth='3' />
							</PaneTool>
							<PaneTool $x={359} viewBox='0 0 62 56'>
								<circle cx='26' cy='24' r='24' fill='none' stroke='#252423' strokeWidth='3' />
								<path d='M6 22l14 8 12-6 14-6M14 30v14M22 32v14M30 28v18M38 26v14' fill='none' stroke='#252423' strokeWidth='2.4' />
								<path d='M44 40l16 14' stroke='#252423' strokeWidth='4.5' strokeDasharray='3 1' />
							</PaneTool>
							<PaneNotch viewBox='0 0 44 14'>
								<path d='M0 13L22 1l22 12' fill='#f3f2f1' stroke='#8a8886' strokeWidth='2' />
							</PaneNotch>
						</PaneTabs>
						<VizGrid>
							{vizIcons.map((v, i) => (
								<VizSvg key={i} viewBox='0 0 46 46' $sel={v.sel}>{v.node}</VizSvg>
							))}
							<MoreDots>...</MoreDots>
						</VizGrid>
					</VizUpper>
					{fieldWells.map(w => (
						<div key={w.label}>
							<WellLabel $top={w.top}>{w.label}</WellLabel>
							<WellBox>
								{w.items.map(it => (
									<Pill key={it}>
										{it}
										<PillTools><PillChev /><PillClose /></PillTools>
									</Pill>
								))}
							</WellBox>
						</div>
					))}
					<PaneScroll $top={848} $h={519} />
				</VizPanel>
				<DataPanel>
					<PaneHead $pad={23} $right={22}>
						Data
						<PushRight><Chevrons /></PushRight>
					</PaneHead>
					<DataSearch>
						<LensRight />
						Search
					</DataSearch>
					{tree.map(n =>
						n.kind === 'table' ? (
							<TreeRow key={n.name} $table>
								<TreeChev>{n.open ? <ChevDown /> : <ChevRight />}</TreeChev>
								<TypeSlot>
									<TableGlyph />
									{n.badge && <TableBadge><CheckMark /></TableBadge>}
								</TypeSlot>
								{n.name}
							</TreeRow>
						) : (
							<TreeRow key={n.name}>
								<TreeChev>{n.chev && <ChevRight />}</TreeChev>
								<Check $on={n.on}>{n.on && <CheckMark />}</Check>
								<TypeSlot>
									{n.type === 'calc' && <CalcGlyph />}
									{n.type === 'date' && <DateGlyph />}
									{n.type === 'sum' && <SumGlyph />}
								</TypeSlot>
								{n.name}
								{n.warn && (
									<WarnIcon viewBox='0 0 28 28'>
										<path d='M14 2l13 24H1z' fill='none' stroke='#d13438' strokeWidth='2' />
										<path d='M14 10v9M14 21v3' stroke='#d13438' strokeWidth='2' />
									</WarnIcon>
								)}
							</TreeRow>
						),
					)}
				</DataPanel>
			</Main>

			<Tip>Search</Tip>
			<Recorder>
				<RecorderTop>
					<svg width='47' height='24' viewBox='0 0 47 24'>
						<path d='M2 22l8-6a8 8 0 1 1 10-2l-6 4' fill='none' stroke='#fff' strokeWidth='2' />
						<path d='M30 8h4M37 8h4M44 8h3' stroke='#fff' strokeWidth='3' />
					</svg>
				</RecorderTop>
				<RecorderSlot>
					<svg width='47' height='38' viewBox='0 0 47 38'>
						<path d='M0 6h13l4-6h16l3 6h11v32H0z' fill='#fff' />
						<circle cx='24' cy='21' r='9' fill='#fff' stroke='#1c1c1c' strokeWidth='3' />
					</svg>
				</RecorderSlot>
				<RecorderSlot>
					<svg width='47' height='32' viewBox='0 0 47 32'>
						<rect x='0' y='0' width='33' height='32' rx='2' fill='#fff' />
						<path d='M35 14L47 2v28L35 20z' fill='#fff' />
					</svg>
				</RecorderSlot>
				<RecorderSlot>
					<svg width='47' height='42' viewBox='0 0 47 42'>
						<path d='M0 0h40v4H6v32H0z' fill='#fff' />
						<rect x='7' y='7' width='40' height='35' fill='#fff' />
					</svg>
				</RecorderSlot>
				<RecorderSlot>
					<svg width='48' height='46' viewBox='0 0 48 46'>
						<path d='M19 0h10l2 7 6 3 6-3 5 8-5 5v6l5 5-5 8-6-3-6 3-2 7H19l-2-7-6-3-6 3-5-8 5-5v-6L0 15l5-8 6 3 6-3z' fill='#fff' />
						<circle cx='24' cy='23' r='7' fill='#1c1c1c' />
					</svg>
				</RecorderSlot>
			</Recorder>

			<StatusBar>
				Page 2 of 3
				<ZoomWrap>
					<svg width='300' height='30' viewBox='0 0 300 30'>
						<path d='M0 13h9v6H0z M18 15h250M104 0v30M141 6v18M290 0v30M284 12h12v6h-12z' stroke='#605e5c' strokeWidth='3' fill='#605e5c' />
						<rect x='101' y='0' width='6' height='30' fill='#605e5c' />
					</svg>
					<ZoomValue>72%</ZoomValue>
					<svg width='40' height='34' viewBox='0 0 40 34'>
						<path d='M2 2h36v30H2z' fill='none' stroke='#605e5c' strokeWidth='2.6' />
						<path d='M10 14V9h5M30 14V9h-5M10 20v5h5M30 20v5h-5' fill='none' stroke='#605e5c' strokeWidth='2' />
					</svg>
				</ZoomWrap>
			</StatusBar>

			<Taskbar>
				<Weather>
					<WeatherIcon><WeatherBadge>2</WeatherBadge></WeatherIcon>
					<WeatherText>
						106°F
						<WeatherSub>Sunny</WeatherSub>
					</WeatherText>
				</Weather>
				<WinLogo><span /><span /><span /><span /></WinLogo>
				<TaskSearch>
					<svg width='42' height='44' viewBox='0 0 42 44'>
						<circle cx='19' cy='19' r='15' fill='none' stroke='#f2f2f2' strokeWidth='4' />
						<path d='M29 30l9 11' stroke='#f2f2f2' strokeWidth='5' />
					</svg>
					Search
				</TaskSearch>
				<AppSlots>
					<AppSlot>
						<svg width='62' height='56' viewBox='0 0 62 56'>
							<rect x='0' y='16' width='44' height='40' fill='#6e6e70' />
							<rect x='14' y='0' width='46' height='42' rx='2' fill='#f5f5f5' />
						</svg>
					</AppSlot>
					<AppSlot>
						<svg width='58' height='62' viewBox='0 0 58 62'>
							<path d='M18 14V4h22v10' fill='none' stroke='#25a8e6' strokeWidth='5' />
							<path d='M0 14h58v42a6 6 0 0 1-6 6H6a6 6 0 0 1-6-6z' fill='#f2f2f2' />
							<rect x='18' y='22' width='10' height='14' fill='#f25022' />
							<rect x='31' y='22' width='10' height='14' fill='#7fba00' />
							<rect x='18' y='39' width='10' height='14' fill='#00a4ef' />
							<rect x='31' y='39' width='10' height='14' fill='#ffb900' />
						</svg>
					</AppSlot>
					<AppSlot $dot>
						<svg width='60' height='58' viewBox='0 0 60 58'>
							<path d='M0 4a4 4 0 0 1 4-4h16l6 10h30a4 4 0 0 1 4 4v40a4 4 0 0 1-4 4H4a4 4 0 0 1-4-4z' fill='#f8c33c' />
							<path d='M0 0h22l4 10H0z' fill='#d99a0c' />
							<rect x='10' y='32' width='38' height='26' rx='3' fill='#0f78d4' />
							<path d='M22 42h14' stroke='#fff' strokeWidth='3' />
						</svg>
					</AppSlot>
					<AppSlot $dot>
						<svg width='60' height='60' viewBox='0 0 60 60'>
							<defs>
								<linearGradient id='edgeA' x1='0' y1='0' x2='1' y2='1'>
									<stop offset='0' stopColor='#28c0e0' />
									<stop offset='1' stopColor='#5bd06b' />
								</linearGradient>
							</defs>
							<circle cx='30' cy='30' r='29' fill='url(#edgeA)' />
							<path d='M2 34C4 18 18 14 30 18c10 4 12 14 8 18-6 6-16 2-14-6-8 6-6 24 10 28-18 4-34-6-32-24z' fill='#0c59a4' />
						</svg>
					</AppSlot>
					<AppSlot>
						<svg width='62' height='60' viewBox='0 0 62 60'>
							<path d='M20 0h34l8 26v34H22z' fill='#35b8f0' />
							<path d='M30 6h24l8 20-30 12z' fill='#0f5ea8' />
							<rect x='0' y='14' width='34' height='36' rx='3' fill='#0f78d4' />
							<ellipse cx='17' cy='32' rx='9' ry='12' fill='none' stroke='#fff' strokeWidth='4' />
						</svg>
					</AppSlot>
					<AppSlot>
						<svg width='60' height='60' viewBox='0 0 60 60'>
							<circle cx='30' cy='30' r='25' fill='none' stroke='#3fb618' strokeWidth='8' />
							<path d='M10 16a25 25 0 0 0 0 28' fill='none' stroke='#1a2a20' strokeWidth='5' strokeDasharray='4 4' />
						</svg>
					</AppSlot>
					<AppSlot $dot>
						<svg width='72' height='72' viewBox='0 0 72 72'>
							<path d='M6 40A26 26 0 0 1 50 22L32 42 19 64A26 26 0 0 1 6 40z' fill='#ea4335' />
							<path d='M19 64L32 40h26a26 26 0 0 1-39 24z' fill='#34a853' />
							<path d='M30 22h24a26 26 0 0 1 4 26L44 40z' fill='#fbbc05' />
							<circle cx='32' cy='40' r='13' fill='#fff' />
							<circle cx='32' cy='40' r='10' fill='#2a72e5' />
							<circle cx='50' cy='18' r='18' fill='#4f5f6c' />
							<text x='50' y='25' textAnchor='middle' fontFamily={UI} fontSize='20' fill='#e0e0e0'>m</text>
						</svg>
					</AppSlot>
					<AppSlot>
						<svg width='60' height='60' viewBox='0 0 60 60'>
							<rect x='8' y='0' width='20' height='40' rx='10' fill='#f3c713' />
							<circle cx='18' cy='8' r='9' fill='#e8a05a' />
							<path d='M36 0h10v8M0 50v10h10' fill='none' stroke='#3a9a52' strokeWidth='3' />
							<path d='M24 28l14 32M40 28L26 60M18 46h28' stroke='#9a62d8' strokeWidth='3.4' fill='none' />
						</svg>
					</AppSlot>
					<AppSlot>
						<svg width='60' height='62' viewBox='0 0 60 62'>
							<circle cx='32' cy='10' r='9' fill='#7b83eb' />
							<circle cx='50' cy='14' r='6' fill='#5059c9' />
							<rect x='40' y='22' width='18' height='28' rx='8' fill='#5059c9' />
							<rect x='16' y='22' width='32' height='40' rx='14' fill='#7b83eb' />
							<rect x='0' y='14' width='30' height='34' rx='3' fill='#4b53bc' />
							<path d='M7 22h16M15 22v18' stroke='#fff' strokeWidth='3.4' />
						</svg>
					</AppSlot>
					<AppSlot>
						<svg width='60' height='60' viewBox='0 0 60 60'>
							<rect x='0' y='0' width='60' height='60' fill='#00f060' />
							<path d='M18 8v24l24 22M42 14L18 32v22' fill='none' stroke='#111' strokeWidth='3' />
						</svg>
					</AppSlot>
					<AppSlot $active>
						<svg width='52' height='60' viewBox='0 0 52 60'>
							<rect x='34' y='0' width='18' height='60' fill='#e0a60e' />
							<rect x='17' y='15' width='22' height='45' fill='#f2c812' />
							<rect x='0' y='30' width='22' height='30' fill='#f7dc66' />
						</svg>
					</AppSlot>
				</AppSlots>
				<Tray>
					<TraySlot>
						<svg width='26' height='16' viewBox='0 0 26 16'><path d='M2 14L13 2l11 12' fill='none' stroke='#fff' strokeWidth='2.4' /></svg>
					</TraySlot>
					<TraySlot $ml={36}>ع</TraySlot>
					<TraySlot $ml={32}>
						<svg width='38' height='32' viewBox='0 0 38 32'>
							<path d='M2 11a24 24 0 0 1 34 0M8 17a16 16 0 0 1 22 0M13 23a9 9 0 0 1 12 0' fill='none' stroke='#fff' strokeWidth='2.6' />
							<circle cx='19' cy='28' r='2.6' fill='#fff' />
						</svg>
					</TraySlot>
					<TraySlot $ml={2}>
						<svg width='38' height='32' viewBox='0 0 38 32'>
							<path d='M2 11h6l9-8v26l-9-8H2z' fill='none' stroke='#fff' strokeWidth='2.4' />
							<path d='M22 10a8 8 0 0 1 0 12M27 6a14 14 0 0 1 0 20M32 2a20 20 0 0 1 0 28' fill='none' stroke='#fff' strokeWidth='2' />
						</svg>
					</TraySlot>
					<TraySlot>
						<svg width='38' height='32' viewBox='0 0 38 32'>
							<rect x='2' y='6' width='32' height='20' rx='4' fill='none' stroke='#fff' strokeWidth='2.4' />
							<path d='M36 12v8' stroke='#fff' strokeWidth='3' />
							<path d='M18 2v10M10 14h16v4a8 8 0 0 1-16 0z' fill='#fff' stroke='#3b1a42' strokeWidth='1' />
						</svg>
					</TraySlot>
					<Clock>
						5:00 PM
						<br />
						7/25/2025
					</Clock>
				</Tray>
			</Taskbar>
		</Shell>
	)
}
